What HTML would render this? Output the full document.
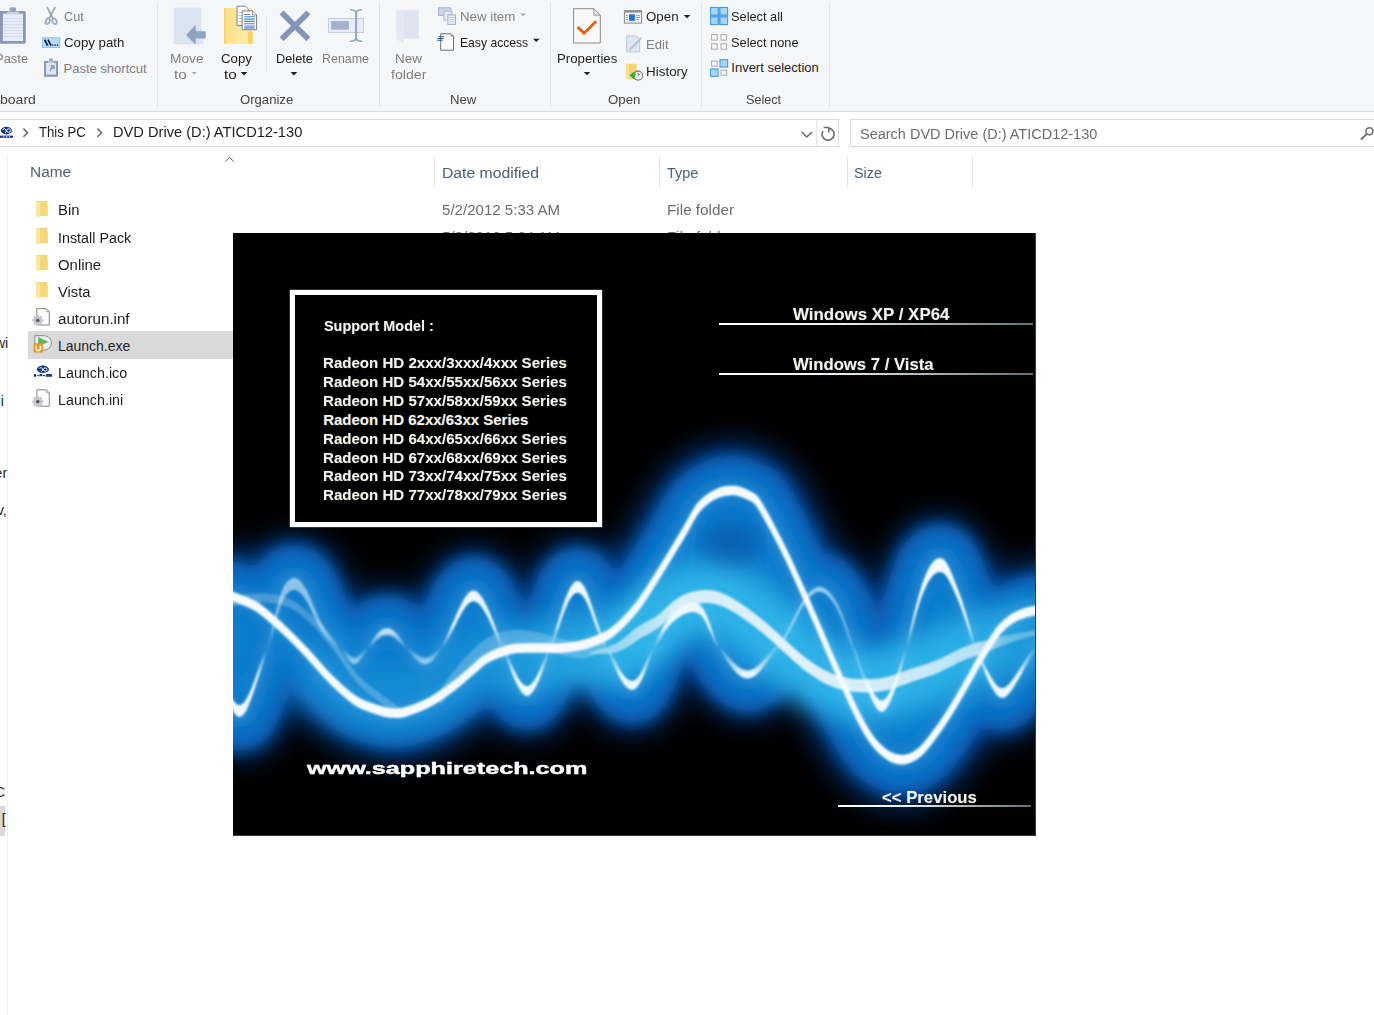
<!DOCTYPE html>
<html lang="en">
<head>
<meta charset="utf-8">
<title>DVD Drive (D:) ATICD12-130</title>
<style>
html,body{margin:0;padding:0;}
body{width:1374px;height:1015px;position:relative;overflow:hidden;background:#fff;font-family:"Liberation Sans",sans-serif;}
.t{position:absolute;white-space:pre;line-height:1;transform-origin:0 50%;font-family:"Liberation Sans",sans-serif;}
.a{position:absolute;}
.vs{position:absolute;width:1px;background:#e2e3e4;}
.ic{position:absolute;overflow:visible;}
</style>
</head>

<body>
<!-- ribbon background -->
<div class="a" style="left:0;top:0;width:1374px;height:111px;background:#f5f6f7;"></div>
<div class="a" style="left:0;top:111px;width:1374px;height:1px;background:#dadbdc;"></div>
<!-- ribbon group separators -->
<div class="vs" style="left:157px;top:2px;height:105px;"></div>
<div class="vs" style="left:266px;top:16px;height:55px;"></div>
<div class="vs" style="left:379px;top:2px;height:105px;"></div>
<div class="vs" style="left:550px;top:2px;height:105px;"></div>
<div class="vs" style="left:701px;top:2px;height:105px;"></div>
<div class="vs" style="left:829px;top:2px;height:105px;"></div>
<!-- address box -->
<div class="a" style="left:-2px;top:119px;width:839px;height:26px;border:1px solid #d9d9d9;background:#fff;"></div>
<div class="a" style="left:816px;top:120px;width:1px;height:26px;background:#e5e5e5;"></div>
<!-- search box -->
<div class="a" style="left:850px;top:119px;width:530px;height:26px;border:1px solid #d9d9d9;background:#fff;"></div>
<!-- nav pane divider -->
<div class="a" style="left:7px;top:156px;width:1px;height:859px;background:#f0f0f0;"></div>
<!-- column header separators -->
<div class="a" style="left:434px;top:156px;width:1px;height:32px;background:#e5e5e5;"></div>
<div class="a" style="left:659px;top:156px;width:1px;height:32px;background:#e5e5e5;"></div>
<div class="a" style="left:847px;top:156px;width:1px;height:32px;background:#e5e5e5;"></div>
<div class="a" style="left:972px;top:156px;width:1px;height:32px;background:#e5e5e5;"></div>
<!-- selected row -->
<div class="a" style="left:28px;top:331px;width:410px;height:27.5px;background:#d9d9d9;"></div>
<!-- nav pane selected sliver -->
<div class="a" style="left:0;top:806px;width:5px;height:29.5px;background:#d9d9d9;"></div>

<svg class="a" style="left:0;top:190px" width="70" height="230" viewBox="0 190 70 230">
<path d="M39 201.0 H47.2 L47.9 207.0 V215.9 H39Z" fill="#f7d877"/><path d="M35.9 201.0 H39.4 L39.9 202.5 V215.9 L38.6 218.2 L35.9 215.9Z" fill="#fbe7a4"/><path d="M35.9 201.0 H47.2 V201.9 H35.9Z" fill="#eed07c" opacity=".7"/>
<path d="M39 228.03 H47.2 L47.9 234.03 V242.93 H39Z" fill="#f7d877"/><path d="M35.9 228.03 H39.4 L39.9 229.53 V242.93 L38.6 245.23 L35.9 242.93Z" fill="#fbe7a4"/><path d="M35.9 228.03 H47.2 V228.93 H35.9Z" fill="#eed07c" opacity=".7"/>
<path d="M39 255.06 H47.2 L47.9 261.06 V269.96 H39Z" fill="#f7d877"/><path d="M35.9 255.06 H39.4 L39.9 256.56 V269.96 L38.6 272.26 L35.9 269.96Z" fill="#fbe7a4"/><path d="M35.9 255.06 H47.2 V255.96 H35.9Z" fill="#eed07c" opacity=".7"/>
<path d="M39 282.09000000000003 H47.2 L47.9 288.09000000000003 V296.99 H39Z" fill="#f7d877"/><path d="M35.9 282.09000000000003 H39.4 L39.9 283.59000000000003 V296.99 L38.6 299.29 L35.9 296.99Z" fill="#fbe7a4"/><path d="M35.9 282.09000000000003 H47.2 V282.99 H35.9Z" fill="#eed07c" opacity=".7"/>
<path d="M36.8 308.6 H46.3 L49.3 311.6 V325.0 H36.8Z" fill="#fdfdfd" stroke="#858585" stroke-width="1"/><path d="M46.3 308.6 V311.6 H49.3" fill="none" stroke="#9a9a9a" stroke-width=".8"/><g fill="#c2c6cb"><rect x="36.6" y="314.8" width="2.4" height="3" transform="rotate(0 37.8 320.40000000000003)"/><rect x="36.6" y="314.8" width="2.4" height="3" transform="rotate(45 37.8 320.40000000000003)"/><rect x="36.6" y="314.8" width="2.4" height="3" transform="rotate(90 37.8 320.40000000000003)"/><rect x="36.6" y="314.8" width="2.4" height="3" transform="rotate(135 37.8 320.40000000000003)"/><rect x="36.6" y="314.8" width="2.4" height="3" transform="rotate(180 37.8 320.40000000000003)"/><rect x="36.6" y="314.8" width="2.4" height="3" transform="rotate(225 37.8 320.40000000000003)"/><rect x="36.6" y="314.8" width="2.4" height="3" transform="rotate(270 37.8 320.40000000000003)"/><rect x="36.6" y="314.8" width="2.4" height="3" transform="rotate(315 37.8 320.40000000000003)"/><circle cx="37.8" cy="320.40000000000003" r="4.1"/></g><circle cx="37.8" cy="320.40000000000003" r="1.7" fill="#4f545c"/>
<path d="M34.8 335.7 H43.5 C54 335.7 54 350.1 43.5 350.1 H34.8Z" fill="#eceff3" stroke="#8a8a8a" stroke-width="1"/>
<path d="M38.2 337.1 V346 L48.7 342Z" fill="#58b558"/>
<rect x="33.5" y="343.2" width="9.4" height="9.4" fill="#e79a2c"/>
<path d="M36 345.4 V348.2 Q36 350.6 38.2 350.6 Q40.4 350.6 40.4 348.2 V345.4" fill="none" stroke="#fff4dc" stroke-width="1.5"/>
<ellipse cx="42.9" cy="369.3" rx="6" ry="3.7" fill="#153b86"/>
<g fill="none" stroke="#fff" stroke-width=".9"><path d="M39.4 368.4 Q41.2 366.6 42.6 368.6 Q43.6 370.8 41.2 371.4"/><circle cx="45.2" cy="369.5" r="1.7"/></g>
<g fill="#1d3f88"><rect x="33.8" y="374" width="2.2" height="2.8"/><rect x="36.8" y="375" width="2" height="1.2"/><rect x="39.4" y="374" width="3" height="2.2"/><rect x="43" y="375" width="2" height="1.2"/><rect x="45.8" y="374" width="6.2" height="2.8"/></g>
<path d="M36.8 389.8 H46.3 L49.3 392.8 V406.2 H36.8Z" fill="#fdfdfd" stroke="#858585" stroke-width="1"/><path d="M46.3 389.8 V392.8 H49.3" fill="none" stroke="#9a9a9a" stroke-width=".8"/><g fill="#c2c6cb"><rect x="36.6" y="396.0" width="2.4" height="3" transform="rotate(0 37.8 401.6)"/><rect x="36.6" y="396.0" width="2.4" height="3" transform="rotate(45 37.8 401.6)"/><rect x="36.6" y="396.0" width="2.4" height="3" transform="rotate(90 37.8 401.6)"/><rect x="36.6" y="396.0" width="2.4" height="3" transform="rotate(135 37.8 401.6)"/><rect x="36.6" y="396.0" width="2.4" height="3" transform="rotate(180 37.8 401.6)"/><rect x="36.6" y="396.0" width="2.4" height="3" transform="rotate(225 37.8 401.6)"/><rect x="36.6" y="396.0" width="2.4" height="3" transform="rotate(270 37.8 401.6)"/><rect x="36.6" y="396.0" width="2.4" height="3" transform="rotate(315 37.8 401.6)"/><circle cx="37.8" cy="401.6" r="4.1"/></g><circle cx="37.8" cy="401.6" r="1.7" fill="#4f545c"/>
</svg>
<svg class="a" style="left:0;top:0" width="1374" height="170" viewBox="0 0 1374 170">
<!-- Paste clipboard -->
<rect x="-3" y="10.9" width="28.8" height="32.8" rx="1.5" fill="#8b98b5"/>
<rect x="2.9" y="13.7" width="20.1" height="27.3" fill="#e7edf9"/>
<g stroke="#d3dbec" stroke-width="1"><path d="M3 18.5h20M3 21.5h20M3 24.5h20M3 27.5h20M3 30.5h20M3 33.5h20M3 36.5h20"/></g>
<path d="M5.8 14.5 L8 11.6 H18 L19.9 14.5Z" fill="#c9d1e2"/>
<rect x="9.6" y="7.3" width="6.6" height="4.6" rx="1.8" fill="#98a4be"/>
<!-- Cut -->
<g fill="none" stroke="#9aa5bb" stroke-width="1.7" stroke-linecap="round">
<path d="M47.2 7.4 L53 18.4"/><path d="M55 7.4 L49.2 18.4"/>
<ellipse cx="47.7" cy="21.3" rx="2" ry="3" transform="rotate(22 47.7 21.3)"/>
<ellipse cx="54.5" cy="21.3" rx="2" ry="3" transform="rotate(-22 54.5 21.3)"/>
</g>
<!-- Copy path -->
<rect x="42.5" y="37.8" width="17.2" height="9.6" fill="#b6dcfa" stroke="#8cbfe9" stroke-width="1"/>
<g stroke="#0c1c3c" stroke-width="1.7"><path d="M44.6 39.6 L47.6 45.6"/><path d="M48 39.6 L51 45.6"/></g>
<g fill="#0c1c3c"><rect x="52.2" y="44.4" width="1.3" height="1.3"/><rect x="54.5" y="44.4" width="1.3" height="1.3"/><rect x="56.8" y="44.4" width="1.3" height="1.3"/></g>
<!-- Paste shortcut -->
<rect x="44" y="61" width="14" height="15.8" fill="#8b98b5"/>
<rect x="46" y="63" width="10" height="11.6" fill="#dde4f2"/>
<rect x="49" y="58.6" width="4" height="3.4" rx="1.2" fill="#98a4be"/>
<path d="M47.2 62.8 L49 61 H53 L54.8 62.8Z" fill="#c9d1e2"/>
<path d="M50 65.2 H54.6 V69.8 L53 68.2 C51.4 69.4 50.6 70.8 50.4 72.4 C49.4 70 49.8 68.2 51.6 66.8Z" fill="#8b98b5"/>
<!-- Move to -->
<path d="M174.2 8 H200.8 V30.6 H202.8 V43.8 H174.2Z" fill="#dbe4f1" stroke="#d2dcea" stroke-width=".6"/>
<path d="M186 35 L195.7 25.1 V31.3 H205.8 V38.6 H195.7 V44.8Z" fill="#8fa2c2"/>
<!-- Copy to -->
<defs><linearGradient id="fy" x1="0" y1="0" x2="1" y2="0"><stop offset="0" stop-color="#ffdf85"/><stop offset="1" stop-color="#ffeeb4"/></linearGradient></defs>
<rect x="224" y="8" width="28.8" height="35.8" fill="url(#fy)"/>
<rect x="224" y="8" width="2.2" height="35.8" fill="#fbd468"/>
<path d="M248 43.8 V32.5 Q250.4 29 252.8 32.5 V43.8Z" fill="#f9d062"/>
<path d="M237 6.2 H245.5 L248.6 9.4 V25.6 H237Z" fill="#fff" stroke="#7c7c7c" stroke-width="1"/>
<g stroke="#a9b6dc" stroke-width="1"><path d="M238.5 12.5h4M238.5 15.5h4M238.5 18.5h4M238.5 21.5h4"/></g>
<path d="M242.2 10.9 H252.5 L256.6 15 V29.7 H242.2Z" fill="#fff" stroke="#7c7c7c" stroke-width="1"/>
<path d="M252.5 10.9 V15 H256.6" fill="#e9e9e9" stroke="#7c7c7c" stroke-width=".8"/>
<g stroke="#4a7fd6" stroke-width="1.1"><path d="M244.2 14.5h6M244.2 16.8h10.6M244.2 19.1h10.6M244.2 21.4h10.6M244.2 23.7h10.6M244.2 26h10.6M244.2 27.9h10.6"/></g>
<!-- Delete -->
<g stroke="#8496b8" stroke-width="5.6"><path d="M281.6 12.6 L308.4 39.3"/><path d="M308.4 12.6 L281.6 39.3"/></g>
<!-- Rename -->
<rect x="328.5" y="18.5" width="35" height="14" fill="#e8eef9" stroke="#c1cce1" stroke-width="1"/>
<rect x="331.1" y="21.1" width="17.9" height="8.6" fill="#a3b2cf"/>
<g fill="none" stroke="#95a3c0" stroke-width="2"><path d="M356.1 11 V40"/><path d="M350 9.8 Q355.4 9.6 356.1 13 Q356.8 9.6 362.1 9.8" stroke-width="1.6"/><path d="M350 41.2 Q355.4 41.4 356.1 38 Q356.8 41.4 362.1 41.2" stroke-width="1.6"/></g>
<!-- New folder -->
<path d="M403.7 9.9 H418.8 V38.7 H403.7Z" fill="#dde3ef"/>
<path d="M396.1 9.9 L403.7 13.5 V44.3 L396.1 38.7Z" fill="#e3e8f2"/>
<path d="M396.1 9.9 H418.8 V11 H403.7 V13.5Z" fill="#e3e8f2"/>
<!-- New item -->
<rect x="438.7" y="7.8" width="12" height="7.6" fill="#cfd7e8" stroke="#a5b0c8" stroke-width="1"/>
<rect x="443.8" y="11" width="8" height="9.2" fill="#e1e7f3" stroke="#b2bcd2" stroke-width="1"/>
<rect x="447.9" y="14.8" width="7.6" height="9.6" fill="#eaeff8" stroke="#a5b0c8" stroke-width="1"/>
<g stroke="#b9c3d8" stroke-width=".8"><path d="M449 17.5h5.6M449 19.6h5.6M449 21.7h5.6"/></g>
<!-- Easy access -->
<path d="M440.7 33.8 H451 L453.5 36.3 V50.2 H440.7Z" fill="#fafafa" stroke="#6f6f6f" stroke-width="1"/>
<path d="M451 33.8 V36.3 H453.5" fill="none" stroke="#8a8a8a" stroke-width=".8"/>
<g stroke="#1f5f9f" stroke-width="1.1"><path d="M438.4 36.7h5.6M437.6 38.5h6M437 40.3h5.8"/></g>
<!-- Properties -->
<path d="M573.6 8.7 H593.8 L600.3 15.2 V43 H573.6Z" fill="#f8f8f8" stroke="#8a8a8a" stroke-width="1"/>
<path d="M593.8 8.7 V15.2 H600.3Z" fill="#e6e6e6" stroke="#8a8a8a" stroke-width=".8"/>
<path d="M577.6 27 L584 33.2 L596.2 21.2" fill="none" stroke="#e2621b" stroke-width="3"/>
<!-- Open -->
<rect x="624.4" y="10.7" width="17.2" height="12.4" fill="#f1f1f1" stroke="#8a8a8a" stroke-width="1"/>
<rect x="624.4" y="10.7" width="17.2" height="1.8" fill="#8a8a8a"/>
<rect x="629.1" y="14.3" width="5.8" height="6.5" fill="#1a73d9"/>
<g stroke="#8ea0c0" stroke-width=".9"><path d="M626 15.5h2M626 17.5h2M626 19.5h2M636 15.5h4M636 17.5h4M636 19.5h3"/></g>
<!-- Edit -->
<path d="M626.7 35.9 H636.6 L639.6 38.9 V51.9 H626.7Z" fill="#dfe6f3" stroke="#bcc7dc" stroke-width="1"/>
<path d="M629.3 50.3 L641.4 38" stroke="#b4bfd6" stroke-width="1.8"/>
<!-- History -->
<path d="M626.2 63.7 H636.6 V79.3 H628.2 L626.2 78Z" fill="#f9d56e"/>
<rect x="626.2" y="63.7" width="3" height="15" fill="#fbe08e"/>
<path d="M629.6 75.4 L634.4 71.4 V73.6 Q636.6 73 637.6 70 L639.4 71.4 Q638.4 76.6 634.4 77 V79.2Z" fill="#2eb135"/>
<circle cx="638.2" cy="75.6" r="4.5" fill="#ececec" stroke="#7f7f7f" stroke-width="1.1"/>
<path d="M638.2 72.8 V75.6 L640.2 74" fill="none" stroke="#666" stroke-width=".8"/>
<path d="M629.6 75.4 L634.4 71.4 V73.6 L635.6 73.2 L635.2 76.8 L634.4 77 V79.2Z" fill="#2eb135"/>
<!-- Select all -->
<g fill="#a8d4f8" stroke="#3f9de8" stroke-width="1.1">
<rect x="710.5" y="7.5" width="7.6" height="7.6"/><rect x="720" y="7.5" width="7.6" height="7.6"/>
<rect x="710.5" y="17" width="7.6" height="7.6"/><rect x="720" y="17" width="7.6" height="7.6"/></g>
<path d="M719.05 7 V25 M710 16.05 H728.1" stroke="#3f9de8" stroke-width="1.5"/>
<!-- Select none -->
<g fill="#f9f9f9" stroke="#a9a9a9" stroke-width="1">
<rect x="711.6" y="34.7" width="5.6" height="5.4"/><rect x="721" y="34.7" width="5.6" height="5.4"/>
<rect x="711.6" y="43.8" width="5.6" height="5.4"/><rect x="721" y="43.8" width="5.6" height="5.4"/></g>
<!-- Invert selection -->
<g fill="#f9f9f9" stroke="#a9a9a9" stroke-width="1"><rect x="711.6" y="61.1" width="5.6" height="5"/><rect x="721" y="70.2" width="5.6" height="5"/></g>
<g fill="#a8d4f8" stroke="#3f9de8" stroke-width="1.1"><rect x="720" y="59.7" width="7.6" height="7.4"/><rect x="710.5" y="69" width="7.6" height="7.4"/></g>
<!-- dropdown arrows -->
<g fill="#1e1e1e">
<path d="M240.7 72 H247.4 L244.05 75.4Z"/><path d="M290.6 72 H297.3 L293.95 75.4Z"/>
<path d="M533 38.8 H539.6 L536.3 42Z"/><path d="M583.8 72 H590.2 L587 75.2Z"/><path d="M683.7 15 H690.4 L687.05 18.3Z"/></g>
<g fill="#a8a8a8"><path d="M191.8 72 H196.8 L194.3 74.6Z"/><path d="M520.3 13.4 H526 L523.15 16.2Z"/></g>
<!-- address bar: logo, chevrons -->
<g fill="#1c3a8c"><ellipse cx="6.4" cy="130.6" rx="5.6" ry="3.8"/><rect x="0" y="135.6" width="13" height="2.2"/></g>
<g fill="none" stroke="#fff" stroke-width=".9"><path d="M2.5 129.5 Q4.5 127.6 6 129.8 Q7.2 132.4 5 133"/><circle cx="8.6" cy="130.6" r="1.8"/></g>
<g fill="#fff"><rect x="3.2" y="136.2" width="1" height="1"/><rect x="6" y="136.2" width="1.2" height="1"/><rect x="9" y="136.2" width="1" height="1"/></g>
<g fill="none" stroke="#6b6b6b" stroke-width="1.6"><path d="M23.4 128.6 L27.6 132.7 L23.4 136.8"/><path d="M97.4 128.6 L101.6 132.7 L97.4 136.8"/><path d="M801.6 132 L806.8 137 L812 132"/></g>
<!-- refresh -->
<path d="M828.6 128.2 A6 6 0 1 1 822.9 131.2" fill="none" stroke="#6b6b6b" stroke-width="1.6"/>
<path d="M823.6 127.4 H828.8 V132.4" fill="none" stroke="#6b6b6b" stroke-width="1.5"/>
<!-- search magnifier -->
<circle cx="1369.4" cy="131.3" r="3.5" fill="none" stroke="#696969" stroke-width="1.5"/>
<path d="M1366.8 133.9 L1361 139.5" stroke="#696969" stroke-width="1.8"/>
<path d="M225.1 161.6 L229.4 157.3 L233.8 161.6" fill="none" stroke="#5a5a5a" stroke-width="1"/>
</svg>

<!-- launcher window -->
<div class="a" style="left:233px;top:233px;width:803px;height:603px;background:#000;overflow:hidden;z-index:3;box-sizing:border-box;border-right:1px solid #3a3a3a;border-bottom:1px solid #3a3a3a;">
<svg class="a" style="left:0;top:0" width="803" height="603" viewBox="233 233 803 603">
<defs><filter id="b18" x="-10%" y="-40%" width="120%" height="180%"><feGaussianBlur stdDeviation="15"/></filter><filter id="b8" x="-10%" y="-40%" width="120%" height="180%"><feGaussianBlur stdDeviation="7"/></filter><filter id="b9" x="-10%" y="-40%" width="120%" height="180%"><feGaussianBlur stdDeviation="10"/></filter><filter id="b13" x="-10%" y="-60%" width="120%" height="220%"><feGaussianBlur stdDeviation="13"/></filter><filter id="b4" x="-10%" y="-30%" width="120%" height="160%"><feGaussianBlur stdDeviation="4"/></filter><filter id="b1" x="-5%" y="-10%" width="110%" height="120%"><feGaussianBlur stdDeviation="0.9"/></filter><linearGradient id="gc" gradientUnits="userSpaceOnUse" x1="233" y1="0" x2="1036" y2="0"><stop offset="0" stop-color="#2aaee6" stop-opacity=".25"/><stop offset="0.3" stop-color="#2aaee6" stop-opacity=".35"/><stop offset="0.5" stop-color="#2fb6ea" stop-opacity=".95"/><stop offset="0.9" stop-color="#2fb6ea" stop-opacity=".9"/><stop offset="1" stop-color="#2fb6ea" stop-opacity=".45"/></linearGradient><linearGradient id="gb" gradientUnits="userSpaceOnUse" x1="0" y1="556" x2="0" y2="740"><stop offset="0" stop-color="#f4fafd" stop-opacity="1"/><stop offset="0.385" stop-color="#f4fafd" stop-opacity=".95"/><stop offset="0.46" stop-color="#f4fafd" stop-opacity=".4"/><stop offset="0.5" stop-color="#f4fafd" stop-opacity=".12"/><stop offset="0.55" stop-color="#f4fafd" stop-opacity=".4"/><stop offset="0.64" stop-color="#f4fafd" stop-opacity=".95"/><stop offset="1" stop-color="#f4fafd" stop-opacity="1"/></linearGradient><linearGradient id="gcr" gradientUnits="userSpaceOnUse" x1="588" y1="0" x2="1036" y2="0"><stop offset="0" stop-color="#e8f3f9" stop-opacity=".45"/><stop offset="0.2" stop-color="#f2f8fb" stop-opacity=".84"/><stop offset="0.45" stop-color="#f4f9fc" stop-opacity=".9"/><stop offset="0.75" stop-color="#f0f7fb" stop-opacity=".8"/><stop offset="0.87" stop-color="#eef6fa" stop-opacity=".7"/><stop offset="0.93" stop-color="#e8f3f9" stop-opacity=".38"/><stop offset="1" stop-color="#e8f3f9" stop-opacity=".3"/></linearGradient></defs>
<g fill="none" stroke="#063f8e" stroke-linecap="round" stroke-linejoin="round" filter="url(#b18)"><path d="M220.0 594.0C222.6 594.6 229.2 595.4 235.5 597.6C241.8 599.8 249.9 602.3 257.6 607.4C265.4 612.5 273.8 620.4 282.0 628.0C290.2 635.6 298.8 644.3 307.0 653.0C315.2 661.7 323.3 672.0 331.5 680.0C339.7 688.0 347.8 695.8 356.0 701.0C364.2 706.2 374.8 709.0 381.0 711.0C387.2 713.0 389.0 712.8 393.0 713.0C397.0 713.2 398.8 713.8 405.0 712.0C411.2 710.2 421.7 706.5 430.0 702.0C438.3 697.5 447.5 690.7 455.0 685.0C462.5 679.3 469.6 672.5 475.0 668.0C480.4 663.5 481.4 661.2 487.6 658.0C493.8 654.8 503.8 650.7 512.0 649.0C520.2 647.3 528.8 648.2 537.0 648.0C545.2 647.8 553.3 648.7 561.5 648.0C569.7 647.3 577.8 646.5 586.0 644.0C594.2 641.5 602.8 638.9 611.0 633.0C619.2 627.1 627.3 618.9 635.5 608.7C643.7 598.5 651.8 584.7 660.0 571.7C668.2 558.8 678.2 541.8 684.7 531.0C691.2 520.2 693.6 513.2 699.0 507.0C704.4 500.8 711.1 496.2 717.0 493.5C722.9 490.8 729.1 490.1 734.6 490.5C740.1 490.9 746.1 494.0 750.0 496.0C753.9 498.0 754.2 497.0 758.0 502.5C761.8 508.0 768.0 519.6 773.0 529.0C778.0 538.4 783.1 548.4 788.0 558.7C792.9 569.0 797.8 580.2 802.6 591.0C807.4 601.8 812.1 612.4 817.0 623.7C821.9 635.0 827.3 648.3 832.0 659.0C836.7 669.7 840.7 678.5 845.0 688.0C849.3 697.5 853.5 707.3 858.0 716.0C862.5 724.7 866.8 733.3 872.0 740.0C877.2 746.7 883.5 752.8 889.0 756.0C894.5 759.2 899.7 760.3 905.0 759.5C910.3 758.7 915.4 756.1 921.0 751.0C926.6 745.9 933.2 736.3 938.5 729.0C943.8 721.7 948.1 715.0 953.0 707.0C957.9 699.0 963.8 688.3 968.0 681.0C972.2 673.7 974.7 668.7 978.0 663.0C981.3 657.3 984.1 652.7 987.8 647.0C991.5 641.3 995.9 633.8 1000.0 629.0C1004.1 624.2 1008.3 621.2 1012.4 618.5C1016.5 615.8 1021.0 614.3 1024.7 613.0C1028.4 611.7 1030.4 611.3 1034.6 610.5C1038.8 609.7 1047.4 608.4 1050.0 608.0" stroke-width="90"/><path d="M222.0 680.0C223.8 685.2 230.0 704.8 233.0 711.0C236.0 717.2 237.7 717.3 240.0 717.0C242.3 716.7 244.1 715.2 247.0 709.0C249.9 702.8 253.8 691.8 257.6 680.0C261.4 668.2 265.9 652.8 270.0 638.0C274.1 623.2 279.0 600.5 282.0 591.0C285.0 581.5 285.9 583.2 288.0 581.0C290.1 578.8 292.4 577.8 294.6 578.0C296.8 578.2 298.9 579.8 301.0 582.0C303.1 584.2 304.0 584.9 307.0 591.0C310.0 597.1 314.1 609.8 319.0 618.5C323.9 627.2 331.7 636.2 336.5 643.0C341.3 649.8 345.1 655.5 348.0 659.0C350.9 662.5 351.7 663.8 353.7 664.0C355.7 664.2 356.9 663.8 360.0 660.0C363.1 656.2 368.7 645.8 372.0 641.0C375.3 636.2 377.5 633.1 380.0 631.0C382.5 628.9 384.7 628.4 387.0 628.4C389.3 628.4 391.0 628.2 394.0 631.0C397.0 633.8 401.0 640.0 405.0 645.0C409.0 650.0 414.7 657.8 418.0 661.0C421.3 664.2 422.7 664.0 425.0 664.0C427.3 664.0 428.7 665.0 432.0 661.0C435.3 657.0 440.7 648.3 445.0 640.0C449.3 631.7 454.5 618.3 458.0 611.0C461.5 603.7 463.4 599.4 466.0 596.0C468.6 592.6 471.0 590.5 473.5 590.5C476.0 590.5 477.4 590.1 481.0 596.0C484.6 601.9 490.2 614.0 495.0 626.0C499.8 638.0 505.8 657.3 510.0 668.0C514.2 678.7 517.2 685.3 520.0 690.0C522.8 694.7 524.7 696.0 527.0 696.0C529.3 696.0 530.7 696.3 534.0 690.0C537.3 683.7 542.8 669.9 547.0 658.0C551.2 646.1 555.3 629.8 559.0 618.5C562.7 607.2 565.9 596.2 569.0 590.0C572.1 583.8 574.7 581.0 577.5 581.0C580.3 581.0 582.9 583.8 586.0 590.0C589.1 596.2 591.8 607.2 596.0 618.5C600.2 629.8 606.5 647.2 611.0 658.0C615.5 668.8 619.5 677.7 623.0 683.0C626.5 688.3 628.9 690.0 631.7 690.0C634.5 690.0 637.0 688.3 640.0 683.0C643.0 677.7 646.2 667.2 650.0 658.0C653.8 648.8 657.8 636.2 662.5 628.0C667.2 619.8 672.4 613.2 678.0 609.0C683.6 604.8 691.5 602.5 696.0 603.0C700.5 603.5 702.0 606.6 705.0 612.0C708.0 617.4 709.8 626.7 714.0 635.5C718.2 644.3 724.6 657.9 730.0 665.0C735.4 672.1 741.9 676.9 746.4 678.4C750.9 679.9 753.6 676.7 757.0 674.0C760.4 671.3 761.8 669.4 767.0 662.0C772.2 654.6 781.6 640.4 788.0 629.6C794.4 618.8 801.3 603.8 805.5 597.0C809.7 590.2 810.6 590.7 813.0 589.0C815.4 587.3 817.5 586.5 820.0 586.8C822.5 587.1 824.5 586.8 828.0 591.0C831.5 595.2 835.9 599.7 841.0 612.0C846.1 624.3 853.5 650.3 858.7 665.0C863.9 679.7 868.2 692.2 872.0 700.0C875.8 707.8 878.8 711.0 881.5 712.0C884.2 713.0 885.9 709.3 888.0 706.0C890.1 702.7 891.3 700.4 894.0 692.4C896.7 684.4 900.7 671.1 904.0 658.0C907.3 644.9 910.3 627.6 914.0 613.6C917.7 599.6 922.8 582.6 926.0 574.0C929.2 565.4 930.7 564.7 933.0 562.0C935.3 559.3 937.6 558.0 939.8 558.0C942.0 558.0 943.8 558.9 946.0 562.0C948.2 565.1 950.2 569.8 953.0 576.7C955.8 583.7 959.7 593.5 963.0 603.7C966.3 613.9 969.7 627.3 973.0 638.0C976.3 648.7 979.7 659.5 983.0 668.0C986.3 676.5 989.7 684.0 992.7 689.0C995.7 694.0 997.7 698.0 1001.0 698.0C1004.3 698.0 1008.4 694.0 1012.4 689.0C1016.4 684.0 1021.0 674.4 1024.7 668.0C1028.4 661.6 1030.4 658.2 1034.6 650.5C1038.8 642.8 1047.4 626.8 1050.0 622.0" stroke-width="78"/></g>
<g fill="#0963ba" stroke="#0963ba" stroke-linecap="round" stroke-linejoin="round" filter="url(#b8)"><path d="M215 588.3L221 588.9L227 589.9L233 591.2L239 593.1L245 595.4L251 598.3L257 601.8L263 604.9L269 603.0L275 598.0L281 591.3L287 584.1L293 578.3L299 579.5L305 585.9L311 595.4L317 606.2L323 616.9L329 626.8L335 635.5L341 643.1L347 648.6L353 650.9L359 649.6L365 644.8L371 637.9L377 631.4L383 627.2L389 626.6L395 629.3L401 634.7L407 641.3L413 647.8L419 652.3L425 653.7L431 651.3L437 645.2L443 635.9L449 624.5L455 612.5L461 601.8L467 594.2L473 591.2L479 593.4L485 600.8L491 612.4L497 623.5L503 632.8L509 639.2L515 642.5L521 642.4L527 642.1L533 642.0L539 641.5L545 636.9L551 628.5L557 616.8L563 603.6L569 591.0L575 584.5L581 585.2L587 592.6L593 603.6L599 613.7L605 620.9L611 623.7L617 621.6L623 616.1L629 609.7L635 602.5L641 594.4L647 585.8L653 576.7L659 567.3L665 557.7L671 547.9L677 537.9L683 527.7L689 517.8L695 508.7L701 500.9L707 494.9L713 490.5L719 487.7L725 486.1L731 485.5L737 486.1L743 487.7L749 491.0L755 496.2L761 503.5L767 512.6L773 523.2L779 534.9L785 547.1L791 559.7L797 570.1L803 577.1L809 581.5L815 583.9L821 584.9L827 587.9L833 594.8L839 605.5L845 619.4L851 635.6L857 651.2L863 663.8L869 672.7L875 677.4L881 678.3L887 676.5L893 670.2L899 658.6L905 642.2L911 622.2L917 600.3L923 581.6L929 567.9L935 560.3L941 559.3L947 564.1L953 574.1L959 588.7L965 605.8L971 619.9L977 630.5L983 635.6L989 634.9L995 629.6L1001 623.8L1007 617.8L1013 613.2L1019 609.9L1025 607.5L1031 605.7L1037 604.3L1043 603.3L1049 602.7L1055 602.2L1055 636.3L1049 639.8L1043 645.4L1037 653.1L1031 662.8L1025 673.4L1019 683.3L1013 691.5L1007 696.5L1001 697.3L995 693.3L989 687.1L983 682.6L977 681.3L971 684.3L965 692.1L959 702.5L953 712.4L947 722.0L941 731.0L935 739.4L929 747.0L923 753.4L917 758.5L911 762.0L905 763.8L899 763.9L893 762.4L887 759.3L881 754.5L875 748.0L869 739.8L863 730.1L857 718.9L851 708.2L845 699.2L839 692.0L833 686.7L827 683.3L821 680.2L815 676.6L809 672.5L803 667.9L797 663.0L791 658.6L785 656.9L779 657.8L773 661.4L767 667.2L761 673.9L755 678.6L749 680.8L743 680.1L737 676.6L731 670.4L725 661.4L719 650.1L713 638.1L707 627.1L701 618.2L695 612.7L689 611.4L683 613.3L677 617.5L671 623.9L665 632.8L659 644.1L653 657.2L647 670.3L641 681.1L635 687.7L629 688.8L623 684.2L617 676.6L611 669.2L605 663.1L599 659.4L593 658.7L587 659.4L581 660.1L575 660.5L569 660.8L563 660.8L557 662.6L551 667.7L545 674.9L539 683.2L533 690.6L527 693.9L521 690.9L515 682.8L509 674.2L503 667.1L497 663.0L491 662.8L485 666.6L479 671.0L473 675.8L467 680.9L461 685.9L455 690.7L449 695.3L443 699.6L437 703.5L431 707.1L425 710.2L419 713.0L413 715.2L407 716.9L401 717.9L395 718.3L389 718.0L383 717.0L377 715.6L371 713.6L365 711.1L359 708.0L353 704.3L347 699.8L341 694.8L335 689.1L329 683.0L323 676.6L317 670.1L311 663.5L305 657.1L299 650.9L293 644.8L287 638.9L281 638.4L275 643.3L269 653.1L263 667.6L257 685.8L251 700.8L245 710.4L239 713.3L233 709.4L227 702.9L221 695.5L215 689.3Z" stroke="none"/><path d="M220.0 594.0C222.6 594.6 229.2 595.4 235.5 597.6C241.8 599.8 249.9 602.3 257.6 607.4C265.4 612.5 273.8 620.4 282.0 628.0C290.2 635.6 298.8 644.3 307.0 653.0C315.2 661.7 323.3 672.0 331.5 680.0C339.7 688.0 347.8 695.8 356.0 701.0C364.2 706.2 374.8 709.0 381.0 711.0C387.2 713.0 389.0 712.8 393.0 713.0C397.0 713.2 398.8 713.8 405.0 712.0C411.2 710.2 421.7 706.5 430.0 702.0C438.3 697.5 447.5 690.7 455.0 685.0C462.5 679.3 469.6 672.5 475.0 668.0C480.4 663.5 481.4 661.2 487.6 658.0C493.8 654.8 503.8 650.7 512.0 649.0C520.2 647.3 528.8 648.2 537.0 648.0C545.2 647.8 553.3 648.7 561.5 648.0C569.7 647.3 577.8 646.5 586.0 644.0C594.2 641.5 602.8 638.9 611.0 633.0C619.2 627.1 627.3 618.9 635.5 608.7C643.7 598.5 651.8 584.7 660.0 571.7C668.2 558.8 678.2 541.8 684.7 531.0C691.2 520.2 693.6 513.2 699.0 507.0C704.4 500.8 711.1 496.2 717.0 493.5C722.9 490.8 729.1 490.1 734.6 490.5C740.1 490.9 746.1 494.0 750.0 496.0C753.9 498.0 754.2 497.0 758.0 502.5C761.8 508.0 768.0 519.6 773.0 529.0C778.0 538.4 783.1 548.4 788.0 558.7C792.9 569.0 797.8 580.2 802.6 591.0C807.4 601.8 812.1 612.4 817.0 623.7C821.9 635.0 827.3 648.3 832.0 659.0C836.7 669.7 840.7 678.5 845.0 688.0C849.3 697.5 853.5 707.3 858.0 716.0C862.5 724.7 866.8 733.3 872.0 740.0C877.2 746.7 883.5 752.8 889.0 756.0C894.5 759.2 899.7 760.3 905.0 759.5C910.3 758.7 915.4 756.1 921.0 751.0C926.6 745.9 933.2 736.3 938.5 729.0C943.8 721.7 948.1 715.0 953.0 707.0C957.9 699.0 963.8 688.3 968.0 681.0C972.2 673.7 974.7 668.7 978.0 663.0C981.3 657.3 984.1 652.7 987.8 647.0C991.5 641.3 995.9 633.8 1000.0 629.0C1004.1 624.2 1008.3 621.2 1012.4 618.5C1016.5 615.8 1021.0 614.3 1024.7 613.0C1028.4 611.7 1030.4 611.3 1034.6 610.5C1038.8 609.7 1047.4 608.4 1050.0 608.0" fill="none" stroke-width="70"/><path d="M222.0 680.0C223.8 685.2 230.0 704.8 233.0 711.0C236.0 717.2 237.7 717.3 240.0 717.0C242.3 716.7 244.1 715.2 247.0 709.0C249.9 702.8 253.8 691.8 257.6 680.0C261.4 668.2 265.9 652.8 270.0 638.0C274.1 623.2 279.0 600.5 282.0 591.0C285.0 581.5 285.9 583.2 288.0 581.0C290.1 578.8 292.4 577.8 294.6 578.0C296.8 578.2 298.9 579.8 301.0 582.0C303.1 584.2 304.0 584.9 307.0 591.0C310.0 597.1 314.1 609.8 319.0 618.5C323.9 627.2 331.7 636.2 336.5 643.0C341.3 649.8 345.1 655.5 348.0 659.0C350.9 662.5 351.7 663.8 353.7 664.0C355.7 664.2 356.9 663.8 360.0 660.0C363.1 656.2 368.7 645.8 372.0 641.0C375.3 636.2 377.5 633.1 380.0 631.0C382.5 628.9 384.7 628.4 387.0 628.4C389.3 628.4 391.0 628.2 394.0 631.0C397.0 633.8 401.0 640.0 405.0 645.0C409.0 650.0 414.7 657.8 418.0 661.0C421.3 664.2 422.7 664.0 425.0 664.0C427.3 664.0 428.7 665.0 432.0 661.0C435.3 657.0 440.7 648.3 445.0 640.0C449.3 631.7 454.5 618.3 458.0 611.0C461.5 603.7 463.4 599.4 466.0 596.0C468.6 592.6 471.0 590.5 473.5 590.5C476.0 590.5 477.4 590.1 481.0 596.0C484.6 601.9 490.2 614.0 495.0 626.0C499.8 638.0 505.8 657.3 510.0 668.0C514.2 678.7 517.2 685.3 520.0 690.0C522.8 694.7 524.7 696.0 527.0 696.0C529.3 696.0 530.7 696.3 534.0 690.0C537.3 683.7 542.8 669.9 547.0 658.0C551.2 646.1 555.3 629.8 559.0 618.5C562.7 607.2 565.9 596.2 569.0 590.0C572.1 583.8 574.7 581.0 577.5 581.0C580.3 581.0 582.9 583.8 586.0 590.0C589.1 596.2 591.8 607.2 596.0 618.5C600.2 629.8 606.5 647.2 611.0 658.0C615.5 668.8 619.5 677.7 623.0 683.0C626.5 688.3 628.9 690.0 631.7 690.0C634.5 690.0 637.0 688.3 640.0 683.0C643.0 677.7 646.2 667.2 650.0 658.0C653.8 648.8 657.8 636.2 662.5 628.0C667.2 619.8 672.4 613.2 678.0 609.0C683.6 604.8 691.5 602.5 696.0 603.0C700.5 603.5 702.0 606.6 705.0 612.0C708.0 617.4 709.8 626.7 714.0 635.5C718.2 644.3 724.6 657.9 730.0 665.0C735.4 672.1 741.9 676.9 746.4 678.4C750.9 679.9 753.6 676.7 757.0 674.0C760.4 671.3 761.8 669.4 767.0 662.0C772.2 654.6 781.6 640.4 788.0 629.6C794.4 618.8 801.3 603.8 805.5 597.0C809.7 590.2 810.6 590.7 813.0 589.0C815.4 587.3 817.5 586.5 820.0 586.8C822.5 587.1 824.5 586.8 828.0 591.0C831.5 595.2 835.9 599.7 841.0 612.0C846.1 624.3 853.5 650.3 858.7 665.0C863.9 679.7 868.2 692.2 872.0 700.0C875.8 707.8 878.8 711.0 881.5 712.0C884.2 713.0 885.9 709.3 888.0 706.0C890.1 702.7 891.3 700.4 894.0 692.4C896.7 684.4 900.7 671.1 904.0 658.0C907.3 644.9 910.3 627.6 914.0 613.6C917.7 599.6 922.8 582.6 926.0 574.0C929.2 565.4 930.7 564.7 933.0 562.0C935.3 559.3 937.6 558.0 939.8 558.0C942.0 558.0 943.8 558.9 946.0 562.0C948.2 565.1 950.2 569.8 953.0 576.7C955.8 583.7 959.7 593.5 963.0 603.7C966.3 613.9 969.7 627.3 973.0 638.0C976.3 648.7 979.7 659.5 983.0 668.0C986.3 676.5 989.7 684.0 992.7 689.0C995.7 694.0 997.7 698.0 1001.0 698.0C1004.3 698.0 1008.4 694.0 1012.4 689.0C1016.4 684.0 1021.0 674.4 1024.7 668.0C1028.4 661.6 1030.4 658.2 1034.6 650.5C1038.8 642.8 1047.4 626.8 1050.0 622.0" fill="none" stroke-width="68"/></g>
<path d="M215 583.0L221 583.0L227 583.3L233 583.9L239 584.9L245 586.2L251 588.1L257 587.8L263 584.8L269 580.7L275 576.1L281 571.0L287 567.9L293 567.1L299 567.5L305 569.3L311 573.7L317 580.9L323 590.4L329 601.2L335 611.9L341 621.8L347 627.5L353 629.2L359 628.2L365 625.7L371 621.6L377 618.8L383 617.7L389 617.6L395 618.2L401 620.4L407 624.2L413 629.5L419 632.6L425 632.5L431 628.2L437 619.5L443 607.5L449 596.8L455 588.6L461 583.2L467 580.4L473 579.5L479 580.1L485 582.5L491 587.6L497 595.8L503 607.2L509 618.1L515 627.2L521 633.6L527 636.4L533 631.8L539 623.4L545 611.8L551 598.6L557 585.9L563 577.2L569 572.5L575 570.8L581 571.0L587 573.0L593 578.5L599 586.8L605 593.7L611 599.1L617 600.9L623 597.5L629 589.4L635 580.8L641 571.7L647 562.3L653 552.7L659 542.9L665 532.9L671 522.7L677 512.8L683 503.7L689 495.9L695 489.9L701 485.5L707 482.7L713 481.0L719 480.0L725 479.5L731 479.4L737 479.5L743 479.9L749 480.9L755 482.7L761 486.0L767 491.2L773 498.5L779 507.6L785 518.2L791 529.9L797 542.1L803 553.7L809 563.0L815 569.8L821 574.2L827 576.6L833 578.6L839 582.7L845 589.8L851 600.5L857 614.4L863 630.6L869 645.5L875 656.4L881 659.0L887 652.4L893 637.2L899 617.2L905 595.3L911 576.6L917 562.9L923 554.2L929 549.4L935 547.5L941 547.1L947 548.2L953 551.9L959 558.7L965 569.1L971 583.7L977 596.6L983 605.7L989 610.9L995 611.9L1001 608.2L1007 604.9L1013 602.5L1019 600.7L1025 599.3L1031 598.3L1037 597.7L1043 597.2L1049 597.0L1055 597.0L1055 652.9L1049 659.3L1043 667.8L1037 678.4L1031 688.3L1025 696.5L1019 702.6L1013 706.6L1007 708.5L1001 709.0L995 707.9L989 705.6L983 705.4L977 707.2L971 710.9L965 717.4L959 727.0L953 736.0L947 744.4L941 752.0L935 758.4L929 763.5L923 767.0L917 769.1L911 770.2L905 770.5L899 770.5L893 770.2L887 769.2L881 767.4L875 764.3L869 759.5L863 753.0L857 744.8L851 735.1L845 723.9L839 713.2L833 704.2L827 697.0L821 691.7L815 688.3L809 685.2L803 681.6L797 677.5L791 674.9L785 674.7L779 676.4L773 679.6L767 683.8L761 687.1L755 688.8L749 689.4L743 689.2L737 688.1L731 685.7L725 681.6L719 675.4L713 666.4L707 655.1L701 643.8L695 635.4L689 630.7L683 631.1L677 637.8L671 649.1L665 662.2L659 675.3L653 686.1L647 694.0L641 698.6L635 700.2L629 700.2L623 699.0L617 695.5L611 689.3L605 682.3L599 675.4L593 669.8L587 666.4L581 665.8L575 666.0L569 667.9L563 672.9L557 680.2L551 688.3L545 696.5L539 702.9L533 706.1L527 707.0L521 706.1L515 703.0L509 696.8L503 690.5L497 685.3L491 682.0L485 681.9L479 685.9L473 690.9L467 695.7L461 700.3L455 704.6L449 708.5L443 712.1L437 715.2L431 718.0L425 720.2L419 721.9L413 723.0L407 723.7L401 724.0L395 724.1L389 724.0L383 723.6L377 723.0L371 722.0L365 720.6L359 718.6L353 716.1L347 713.0L341 709.3L335 704.8L329 699.8L323 694.1L317 688.0L311 681.6L305 675.1L299 668.5L293 662.8L287 662.6L281 667.5L275 677.2L269 690.8L263 705.8L257 716.6L251 723.6L245 727.1L239 728.0L233 726.8L227 722.7L221 718.6L215 714.6Z" fill="#0b7ccc" filter="url(#b9)"/>
<g fill="none" stroke="#0b7ccc" stroke-linecap="round" filter="url(#b9)"><path d="M220.0 594.0C222.6 594.6 229.2 595.4 235.5 597.6C241.8 599.8 249.9 602.3 257.6 607.4C265.4 612.5 273.8 620.4 282.0 628.0C290.2 635.6 298.8 644.3 307.0 653.0C315.2 661.7 323.3 672.0 331.5 680.0C339.7 688.0 347.8 695.8 356.0 701.0C364.2 706.2 374.8 709.0 381.0 711.0C387.2 713.0 389.0 712.8 393.0 713.0C397.0 713.2 398.8 713.8 405.0 712.0C411.2 710.2 421.7 706.5 430.0 702.0C438.3 697.5 447.5 690.7 455.0 685.0C462.5 679.3 469.6 672.5 475.0 668.0C480.4 663.5 481.4 661.2 487.6 658.0C493.8 654.8 503.8 650.7 512.0 649.0C520.2 647.3 528.8 648.2 537.0 648.0C545.2 647.8 553.3 648.7 561.5 648.0C569.7 647.3 577.8 646.5 586.0 644.0C594.2 641.5 602.8 638.9 611.0 633.0C619.2 627.1 627.3 618.9 635.5 608.7C643.7 598.5 651.8 584.7 660.0 571.7C668.2 558.8 678.2 541.8 684.7 531.0C691.2 520.2 693.6 513.2 699.0 507.0C704.4 500.8 711.1 496.2 717.0 493.5C722.9 490.8 729.1 490.1 734.6 490.5C740.1 490.9 746.1 494.0 750.0 496.0C753.9 498.0 754.2 497.0 758.0 502.5C761.8 508.0 768.0 519.6 773.0 529.0C778.0 538.4 783.1 548.4 788.0 558.7C792.9 569.0 797.8 580.2 802.6 591.0C807.4 601.8 812.1 612.4 817.0 623.7C821.9 635.0 827.3 648.3 832.0 659.0C836.7 669.7 840.7 678.5 845.0 688.0C849.3 697.5 853.5 707.3 858.0 716.0C862.5 724.7 866.8 733.3 872.0 740.0C877.2 746.7 883.5 752.8 889.0 756.0C894.5 759.2 899.7 760.3 905.0 759.5C910.3 758.7 915.4 756.1 921.0 751.0C926.6 745.9 933.2 736.3 938.5 729.0C943.8 721.7 948.1 715.0 953.0 707.0C957.9 699.0 963.8 688.3 968.0 681.0C972.2 673.7 974.7 668.7 978.0 663.0C981.3 657.3 984.1 652.7 987.8 647.0C991.5 641.3 995.9 633.8 1000.0 629.0C1004.1 624.2 1008.3 621.2 1012.4 618.5C1016.5 615.8 1021.0 614.3 1024.7 613.0C1028.4 611.7 1030.4 611.3 1034.6 610.5C1038.8 609.7 1047.4 608.4 1050.0 608.0" stroke-width="30"/><path d="M222.0 680.0C223.8 685.2 230.0 704.8 233.0 711.0C236.0 717.2 237.7 717.3 240.0 717.0C242.3 716.7 244.1 715.2 247.0 709.0C249.9 702.8 253.8 691.8 257.6 680.0C261.4 668.2 265.9 652.8 270.0 638.0C274.1 623.2 279.0 600.5 282.0 591.0C285.0 581.5 285.9 583.2 288.0 581.0C290.1 578.8 292.4 577.8 294.6 578.0C296.8 578.2 298.9 579.8 301.0 582.0C303.1 584.2 304.0 584.9 307.0 591.0C310.0 597.1 314.1 609.8 319.0 618.5C323.9 627.2 331.7 636.2 336.5 643.0C341.3 649.8 345.1 655.5 348.0 659.0C350.9 662.5 351.7 663.8 353.7 664.0C355.7 664.2 356.9 663.8 360.0 660.0C363.1 656.2 368.7 645.8 372.0 641.0C375.3 636.2 377.5 633.1 380.0 631.0C382.5 628.9 384.7 628.4 387.0 628.4C389.3 628.4 391.0 628.2 394.0 631.0C397.0 633.8 401.0 640.0 405.0 645.0C409.0 650.0 414.7 657.8 418.0 661.0C421.3 664.2 422.7 664.0 425.0 664.0C427.3 664.0 428.7 665.0 432.0 661.0C435.3 657.0 440.7 648.3 445.0 640.0C449.3 631.7 454.5 618.3 458.0 611.0C461.5 603.7 463.4 599.4 466.0 596.0C468.6 592.6 471.0 590.5 473.5 590.5C476.0 590.5 477.4 590.1 481.0 596.0C484.6 601.9 490.2 614.0 495.0 626.0C499.8 638.0 505.8 657.3 510.0 668.0C514.2 678.7 517.2 685.3 520.0 690.0C522.8 694.7 524.7 696.0 527.0 696.0C529.3 696.0 530.7 696.3 534.0 690.0C537.3 683.7 542.8 669.9 547.0 658.0C551.2 646.1 555.3 629.8 559.0 618.5C562.7 607.2 565.9 596.2 569.0 590.0C572.1 583.8 574.7 581.0 577.5 581.0C580.3 581.0 582.9 583.8 586.0 590.0C589.1 596.2 591.8 607.2 596.0 618.5C600.2 629.8 606.5 647.2 611.0 658.0C615.5 668.8 619.5 677.7 623.0 683.0C626.5 688.3 628.9 690.0 631.7 690.0C634.5 690.0 637.0 688.3 640.0 683.0C643.0 677.7 646.2 667.2 650.0 658.0C653.8 648.8 657.8 636.2 662.5 628.0C667.2 619.8 672.4 613.2 678.0 609.0C683.6 604.8 691.5 602.5 696.0 603.0C700.5 603.5 702.0 606.6 705.0 612.0C708.0 617.4 709.8 626.7 714.0 635.5C718.2 644.3 724.6 657.9 730.0 665.0C735.4 672.1 741.9 676.9 746.4 678.4C750.9 679.9 753.6 676.7 757.0 674.0C760.4 671.3 761.8 669.4 767.0 662.0C772.2 654.6 781.6 640.4 788.0 629.6C794.4 618.8 801.3 603.8 805.5 597.0C809.7 590.2 810.6 590.7 813.0 589.0C815.4 587.3 817.5 586.5 820.0 586.8C822.5 587.1 824.5 586.8 828.0 591.0C831.5 595.2 835.9 599.7 841.0 612.0C846.1 624.3 853.5 650.3 858.7 665.0C863.9 679.7 868.2 692.2 872.0 700.0C875.8 707.8 878.8 711.0 881.5 712.0C884.2 713.0 885.9 709.3 888.0 706.0C890.1 702.7 891.3 700.4 894.0 692.4C896.7 684.4 900.7 671.1 904.0 658.0C907.3 644.9 910.3 627.6 914.0 613.6C917.7 599.6 922.8 582.6 926.0 574.0C929.2 565.4 930.7 564.7 933.0 562.0C935.3 559.3 937.6 558.0 939.8 558.0C942.0 558.0 943.8 558.9 946.0 562.0C948.2 565.1 950.2 569.8 953.0 576.7C955.8 583.7 959.7 593.5 963.0 603.7C966.3 613.9 969.7 627.3 973.0 638.0C976.3 648.7 979.7 659.5 983.0 668.0C986.3 676.5 989.7 684.0 992.7 689.0C995.7 694.0 997.7 698.0 1001.0 698.0C1004.3 698.0 1008.4 694.0 1012.4 689.0C1016.4 684.0 1021.0 674.4 1024.7 668.0C1028.4 661.6 1030.4 658.2 1034.6 650.5C1038.8 642.8 1047.4 626.8 1050.0 622.0" stroke-width="24"/></g>
<path d="M300.0 665.0C310.0 670.8 340.0 694.2 360.0 700.0C380.0 705.8 400.0 705.8 420.0 700.0C440.0 694.2 456.7 672.5 480.0 665.0C503.3 657.5 540.2 657.2 560.0 655.0C579.8 652.8 588.5 653.5 598.5 652.0C608.5 650.5 613.1 649.3 620.0 646.0C626.9 642.7 633.3 636.3 640.0 632.0C646.7 627.7 655.1 623.5 660.0 620.0C664.9 616.5 665.5 614.2 669.6 611.0C673.7 607.8 679.8 603.3 684.7 601.0C689.6 598.7 694.3 597.7 699.0 597.0C703.7 596.3 709.0 596.5 713.0 597.0C717.0 597.5 717.7 597.5 722.8 600.0C727.9 602.5 735.1 606.1 743.5 612.0C751.9 617.9 763.1 627.2 773.0 635.5C782.9 643.8 792.8 654.6 802.6 662.0C812.4 669.4 822.1 676.0 832.0 680.0C841.9 684.0 852.2 685.3 861.7 685.8C871.2 686.3 880.3 684.9 889.0 683.0C897.7 681.1 905.8 677.3 914.0 674.5C922.2 671.7 930.3 669.4 938.5 666.0C946.7 662.6 954.8 657.4 963.0 654.0C971.2 650.6 979.8 648.3 988.0 645.6C996.2 642.9 1004.6 640.1 1012.4 638.0C1020.2 635.9 1028.3 634.5 1034.6 633.0C1040.9 631.5 1047.4 629.7 1050.0 629.0" fill="none" stroke="url(#gc)" stroke-width="70" filter="url(#b13)"/>
<ellipse cx="731" cy="543" rx="30" ry="22" fill="#073a8c" fill-opacity=".4" filter="url(#b9)"/>
<g fill="none" stroke="#8ad8f8" stroke-opacity=".32" filter="url(#b4)"><path d="M220.0 594.0C222.6 594.6 229.2 595.4 235.5 597.6C241.8 599.8 249.9 602.3 257.6 607.4C265.4 612.5 273.8 620.4 282.0 628.0C290.2 635.6 298.8 644.3 307.0 653.0C315.2 661.7 323.3 672.0 331.5 680.0C339.7 688.0 347.8 695.8 356.0 701.0C364.2 706.2 374.8 709.0 381.0 711.0C387.2 713.0 389.0 712.8 393.0 713.0C397.0 713.2 398.8 713.8 405.0 712.0C411.2 710.2 421.7 706.5 430.0 702.0C438.3 697.5 447.5 690.7 455.0 685.0C462.5 679.3 469.6 672.5 475.0 668.0C480.4 663.5 481.4 661.2 487.6 658.0C493.8 654.8 503.8 650.7 512.0 649.0C520.2 647.3 528.8 648.2 537.0 648.0C545.2 647.8 553.3 648.7 561.5 648.0C569.7 647.3 577.8 646.5 586.0 644.0C594.2 641.5 602.8 638.9 611.0 633.0C619.2 627.1 627.3 618.9 635.5 608.7C643.7 598.5 651.8 584.7 660.0 571.7C668.2 558.8 678.2 541.8 684.7 531.0C691.2 520.2 693.6 513.2 699.0 507.0C704.4 500.8 711.1 496.2 717.0 493.5C722.9 490.8 729.1 490.1 734.6 490.5C740.1 490.9 746.1 494.0 750.0 496.0C753.9 498.0 754.2 497.0 758.0 502.5C761.8 508.0 768.0 519.6 773.0 529.0C778.0 538.4 783.1 548.4 788.0 558.7C792.9 569.0 797.8 580.2 802.6 591.0C807.4 601.8 812.1 612.4 817.0 623.7C821.9 635.0 827.3 648.3 832.0 659.0C836.7 669.7 840.7 678.5 845.0 688.0C849.3 697.5 853.5 707.3 858.0 716.0C862.5 724.7 866.8 733.3 872.0 740.0C877.2 746.7 883.5 752.8 889.0 756.0C894.5 759.2 899.7 760.3 905.0 759.5C910.3 758.7 915.4 756.1 921.0 751.0C926.6 745.9 933.2 736.3 938.5 729.0C943.8 721.7 948.1 715.0 953.0 707.0C957.9 699.0 963.8 688.3 968.0 681.0C972.2 673.7 974.7 668.7 978.0 663.0C981.3 657.3 984.1 652.7 987.8 647.0C991.5 641.3 995.9 633.8 1000.0 629.0C1004.1 624.2 1008.3 621.2 1012.4 618.5C1016.5 615.8 1021.0 614.3 1024.7 613.0C1028.4 611.7 1030.4 611.3 1034.6 610.5C1038.8 609.7 1047.4 608.4 1050.0 608.0" stroke-width="8"/><path d="M222.0 680.0C223.8 685.2 230.0 704.8 233.0 711.0C236.0 717.2 237.7 717.3 240.0 717.0C242.3 716.7 244.1 715.2 247.0 709.0C249.9 702.8 253.8 691.8 257.6 680.0C261.4 668.2 265.9 652.8 270.0 638.0C274.1 623.2 279.0 600.5 282.0 591.0C285.0 581.5 285.9 583.2 288.0 581.0C290.1 578.8 292.4 577.8 294.6 578.0C296.8 578.2 298.9 579.8 301.0 582.0C303.1 584.2 304.0 584.9 307.0 591.0C310.0 597.1 314.1 609.8 319.0 618.5C323.9 627.2 331.7 636.2 336.5 643.0C341.3 649.8 345.1 655.5 348.0 659.0C350.9 662.5 351.7 663.8 353.7 664.0C355.7 664.2 356.9 663.8 360.0 660.0C363.1 656.2 368.7 645.8 372.0 641.0C375.3 636.2 377.5 633.1 380.0 631.0C382.5 628.9 384.7 628.4 387.0 628.4C389.3 628.4 391.0 628.2 394.0 631.0C397.0 633.8 401.0 640.0 405.0 645.0C409.0 650.0 414.7 657.8 418.0 661.0C421.3 664.2 422.7 664.0 425.0 664.0C427.3 664.0 428.7 665.0 432.0 661.0C435.3 657.0 440.7 648.3 445.0 640.0C449.3 631.7 454.5 618.3 458.0 611.0C461.5 603.7 463.4 599.4 466.0 596.0C468.6 592.6 471.0 590.5 473.5 590.5C476.0 590.5 477.4 590.1 481.0 596.0C484.6 601.9 490.2 614.0 495.0 626.0C499.8 638.0 505.8 657.3 510.0 668.0C514.2 678.7 517.2 685.3 520.0 690.0C522.8 694.7 524.7 696.0 527.0 696.0C529.3 696.0 530.7 696.3 534.0 690.0C537.3 683.7 542.8 669.9 547.0 658.0C551.2 646.1 555.3 629.8 559.0 618.5C562.7 607.2 565.9 596.2 569.0 590.0C572.1 583.8 574.7 581.0 577.5 581.0C580.3 581.0 582.9 583.8 586.0 590.0C589.1 596.2 591.8 607.2 596.0 618.5C600.2 629.8 606.5 647.2 611.0 658.0C615.5 668.8 619.5 677.7 623.0 683.0C626.5 688.3 628.9 690.0 631.7 690.0C634.5 690.0 637.0 688.3 640.0 683.0C643.0 677.7 646.2 667.2 650.0 658.0C653.8 648.8 657.8 636.2 662.5 628.0C667.2 619.8 672.4 613.2 678.0 609.0C683.6 604.8 691.5 602.5 696.0 603.0C700.5 603.5 702.0 606.6 705.0 612.0C708.0 617.4 709.8 626.7 714.0 635.5C718.2 644.3 724.6 657.9 730.0 665.0C735.4 672.1 741.9 676.9 746.4 678.4C750.9 679.9 753.6 676.7 757.0 674.0C760.4 671.3 761.8 669.4 767.0 662.0C772.2 654.6 781.6 640.4 788.0 629.6C794.4 618.8 801.3 603.8 805.5 597.0C809.7 590.2 810.6 590.7 813.0 589.0C815.4 587.3 817.5 586.5 820.0 586.8C822.5 587.1 824.5 586.8 828.0 591.0C831.5 595.2 835.9 599.7 841.0 612.0C846.1 624.3 853.5 650.3 858.7 665.0C863.9 679.7 868.2 692.2 872.0 700.0C875.8 707.8 878.8 711.0 881.5 712.0C884.2 713.0 885.9 709.3 888.0 706.0C890.1 702.7 891.3 700.4 894.0 692.4C896.7 684.4 900.7 671.1 904.0 658.0C907.3 644.9 910.3 627.6 914.0 613.6C917.7 599.6 922.8 582.6 926.0 574.0C929.2 565.4 930.7 564.7 933.0 562.0C935.3 559.3 937.6 558.0 939.8 558.0C942.0 558.0 943.8 558.9 946.0 562.0C948.2 565.1 950.2 569.8 953.0 576.7C955.8 583.7 959.7 593.5 963.0 603.7C966.3 613.9 969.7 627.3 973.0 638.0C976.3 648.7 979.7 659.5 983.0 668.0C986.3 676.5 989.7 684.0 992.7 689.0C995.7 694.0 997.7 698.0 1001.0 698.0C1004.3 698.0 1008.4 694.0 1012.4 689.0C1016.4 684.0 1021.0 674.4 1024.7 668.0C1028.4 661.6 1030.4 658.2 1034.6 650.5C1038.8 642.8 1047.4 626.8 1050.0 622.0" stroke-width="4"/></g>
<g filter="url(#b1)">
<path d="M225.0 600.0C228.8 599.0 238.5 594.7 248.0 594.0C257.5 593.3 272.2 593.2 282.0 596.0C291.8 598.8 298.8 604.0 307.0 611.0C315.2 618.0 323.3 627.7 331.5 638.0C339.7 648.3 347.8 663.7 356.0 673.0C364.2 682.3 373.7 688.2 381.0 694.0C388.3 699.8 396.8 705.7 400.0 708.0L400.0 717.0C396.8 714.7 388.3 708.8 381.0 703.0C373.7 697.2 364.2 691.3 356.0 682.0C347.8 672.7 339.7 657.3 331.5 647.0C323.3 636.7 315.2 627.0 307.0 620.0C298.8 613.0 291.8 607.8 282.0 605.0C272.2 602.2 257.5 602.3 248.0 603.0C238.5 603.7 228.8 608.0 225.0 609.0Z" fill="#cfe6f5" fill-opacity=".28"/>
<path d="M440.0 690.0C443.8 685.0 455.1 668.7 463.0 660.0C470.9 651.3 479.4 643.0 487.6 638.0C495.8 633.0 503.8 631.0 512.0 630.0C520.2 629.0 528.8 630.5 537.0 632.0C545.2 633.5 553.3 637.3 561.5 639.0C569.7 640.7 578.8 642.8 586.0 642.0C593.2 641.2 601.8 635.3 605.0 634.0L605.0 650.0C601.8 651.3 593.2 657.2 586.0 658.0C578.8 658.8 569.7 656.7 561.5 655.0C553.3 653.3 545.2 649.5 537.0 648.0C528.8 646.5 520.2 645.0 512.0 646.0C503.8 647.0 495.8 649.0 487.6 654.0C479.4 659.0 470.9 667.3 463.0 676.0C455.1 684.7 443.8 701.0 440.0 706.0Z" fill="#cfe6f5" fill-opacity=".28"/>
<path d="M588 653.4L592 652.0L596 650.7L600 649.5L604 648.3L608 646.9L612 645.3L616 643.4L620 641.0L624 638.0L628 634.7L632 631.2L636 628.1L640 625.4L644 623.1L648 621.0L652 618.8L656 616.4L660 613.4L664 609.8L668 605.9L672 602.3L676 599.3L680 596.8L684 594.7L688 593.1L692 591.8L696 590.9L700 590.3L704 589.9L708 589.9L712 590.2L716 591.1L720 592.3L724 593.9L728 595.8L732 598.0L736 600.4L740 603.0L744 605.7L748 608.6L752 611.6L756 614.6L760 617.8L764 621.1L768 624.5L772 628.0L776 631.6L780 635.3L784 639.0L788 642.6L792 646.3L796 649.8L800 653.3L804 656.5L808 659.6L812 662.4L816 665.1L820 667.5L824 669.7L828 671.7L832 673.4L836 674.9L840 676.1L844 677.1L848 677.9L852 678.4L856 678.9L860 679.1L864 679.3L868 679.2L872 679.1L876 678.7L880 678.2L884 677.5L888 676.7L892 675.6L896 674.3L900 672.9L904 671.5L908 670.0L912 668.6L916 667.2L920 665.9L924 664.7L928 663.4L932 662.0L936 660.4L940 658.7L944 656.8L948 654.8L952 652.8L956 650.7L960 648.8L964 647.0L968 645.4L972 644.0L976 642.7L980 641.8L984 640.9L988 639.9L992 639.0L996 638.0L1000 637.0L1004 636.0L1008 635.0L1012 634.2L1016 633.5L1020 632.8L1024 632.2L1028 631.4L1032 630.6L1036 629.7L1040 628.8L1044 627.8L1044 633.7L1040 634.7L1036 635.7L1032 636.5L1028 637.4L1024 638.3L1020 639.5L1016 640.7L1012 642.0L1008 643.4L1004 645.0L1000 646.5L996 648.1L992 649.7L988 651.3L984 652.8L980 654.3L976 655.8L972 657.2L968 658.6L964 660.2L960 662.0L956 663.9L952 666.0L948 668.0L944 670.0L940 671.9L936 673.6L932 675.2L928 676.6L924 677.9L920 679.1L916 680.4L912 681.8L908 683.2L904 684.7L900 686.1L896 687.5L892 688.8L888 689.9L884 690.7L880 691.4L876 691.9L872 692.3L868 692.4L864 692.5L860 692.3L856 692.1L852 691.6L848 691.1L844 690.3L840 689.3L836 688.1L832 686.6L828 684.9L824 682.9L820 680.7L816 678.3L812 675.6L808 672.8L804 669.7L800 666.5L796 663.0L792 659.5L788 655.8L784 652.2L780 648.5L776 644.8L772 641.2L768 637.7L764 634.3L760 631.0L756 627.8L752 624.8L748 621.8L744 618.9L740 616.2L736 613.6L732 611.2L728 609.0L724 607.1L720 605.5L716 604.3L712 603.4L708 603.1L704 603.1L700 603.5L696 604.1L692 605.0L688 606.3L684 607.9L680 610.0L676 612.5L672 615.5L668 619.1L664 623.0L660 626.6L656 629.6L652 632.0L648 634.2L644 636.3L640 638.6L636 641.3L632 644.2L628 646.7L624 649.1L620 651.0L616 652.4L612 653.3L608 653.8L604 654.0L600 654.1L596 654.0L592 653.9L588 653.4Z" fill="url(#gcr)"/>
<path d="M226 693.5L228 699.5L230 704.7L232 709.1L234 712.7L236 715.2L238 716.7L240 717.0L242 716.1L244 714.0L246 710.9L248 706.9L250 702.1L252 696.8L254 691.0L256 684.9L258 678.8L260 672.6L262 666.3L264 659.9L264 654.3L262 659.7L260 665.2L258 670.7L256 676.2L254 681.7L252 686.9L250 691.7L248 696.0L246 699.6L244 702.4L242 704.3L240 705.1L238 704.8L236 703.5L234 701.2L232 698.0L230 694.0L228 689.3L226 684.0Z" fill="url(#gb)"/>
<path d="M264 659.9L266 653.1L268 645.8L270 638.0L272 629.6L274 620.9L276 612.3L278 604.2L280 597.0L282 591.0L284 586.5L286 583.3L288 581.0L290 579.4L292 578.3L294 578.0L296 578.3L298 579.3L300 581.0L302 583.2L304 585.9L306 589.1L308 593.0L310 597.4L312 602.1L314 607.0L316 611.8L318 616.4L320 620.5L322 624.1L324 627.3L326 630.1L328 632.7L330 635.2L332 637.5L334 639.9L336 642.4L338 645.0L340 647.8L342 650.6L344 653.5L346 656.3L346 651.9L344 650.2L342 649.0L340 647.9L338 646.9L336 645.7L334 644.3L332 642.7L330 640.9L328 638.9L326 636.7L324 634.3L322 631.4L320 628.2L318 624.5L316 620.4L314 616.1L312 611.7L310 607.5L308 603.5L306 600.0L304 597.1L302 594.6L300 592.7L298 591.2L296 590.3L294 590.0L292 590.3L290 591.2L288 592.7L286 594.8L284 597.7L282 601.7L280 607.1L278 613.6L276 620.9L274 628.6L272 636.3L270 643.0L268 647.2L266 650.0L264 654.3Z" fill="url(#gb)" opacity=".55"/>
<path d="M346 656.3L348 659.0L350 661.4L352 663.2L354 664.0L356 663.6L358 662.2L360 660.0L362 657.3L364 654.3L366 651.0L368 647.7L370 644.3L372 641.0L374 638.0L376 635.2L378 632.9L380 631.0L382 629.7L384 628.8L386 628.4L388 628.4L390 628.8L392 629.7L394 631.0L396 632.8L398 635.1L400 637.7L402 640.6L404 643.5L406 646.5L408 649.4L410 652.1L412 654.7L414 657.1L416 659.2L418 661.0L420 662.4L422 663.4L424 663.9L426 664.0L428 663.5L430 662.5L432 661.0L434 658.9L436 656.3L438 653.3L440 649.9L442 646.1L444 642.1L446 637.9L448 633.5L450 629.0L452 624.5L454 619.9L456 615.4L458 611.0L460 606.7L462 602.7L464 599.1L466 596.0L468 593.5L470 591.7L472 590.7L474 590.5L476 591.2L478 592.6L480 594.7L482 597.4L484 600.7L486 604.5L488 608.7L490 613.2L492 618.2L494 623.3L496 628.7L498 634.3L500 639.9L502 645.7L504 651.4L506 657.0L508 662.6L510 668.0L512 673.2L514 678.1L516 682.5L518 686.6L520 690.0L522 692.8L524 694.8L526 695.9L528 695.9L530 694.8L532 692.8L534 690.0L536 686.5L538 682.4L540 677.7L542 672.5L544 667.0L546 661.1L548 654.9L550 648.5L552 641.9L554 635.2L556 628.5L558 621.8L560 615.2L562 608.8L564 602.7L566 597.1L568 592.2L570 588.1L572 584.9L574 582.6L576 581.3L578 581.0L580 581.7L582 583.5L584 586.2L586 590.0L588 594.7L590 600.2L592 606.2L594 612.3L596 618.5L598 624.4L600 630.1L602 635.5L604 640.7L606 645.8L608 650.7L610 655.6L612 660.4L614 665.1L616 669.7L618 674.0L620 677.9L622 681.4L624 684.4L626 686.8L628 688.6L630 689.7L632 690.0L634 689.5L636 688.2L638 686.1L640 683.0L642 679.0L644 674.3L646 669.1L648 663.6L650 658.0L652 652.5L654 647.2L656 642.2L658 637.4L660 633.0L662 628.9L664 625.3L666 622.1L668 619.2L670 616.7L672 614.5L674 612.4L676 610.6L678 609.0L680 607.5L682 606.1L684 604.9L686 603.9L688 603.2L690 602.7L692 602.5L694 602.6L696 603.0L698 603.8L700 605.2L702 607.2L704 610.2L706 614.1L708 619.0L710 624.4L712 630.0L714 635.5L716 640.5L718 645.1L720 649.2L722 652.9L724 656.3L726 659.4L728 662.3L730 665.0L732 667.5L734 669.9L736 672.1L738 674.0L740 675.6L742 676.9L744 677.8L746 678.3L748 678.5L750 678.1L752 677.4L754 676.3L756 674.9L758 673.0L760 670.9L762 668.6L764 666.0L766 663.4L768 660.6L770 657.9L772 655.1L774 652.3L774 649.6L772 651.1L770 652.9L768 654.9L766 657.1L764 659.4L762 661.6L760 663.7L758 665.6L756 667.2L754 668.5L752 669.5L750 670.1L748 670.4L746 670.3L744 669.8L742 669.0L740 667.8L738 666.4L736 664.7L734 662.8L732 660.7L730 658.5L728 656.3L726 654.0L724 651.8L722 649.9L720 648.4L718 646.9L716 644.7L714 641.2L712 636.6L710 631.7L708 626.9L706 622.5L704 618.9L702 616.3L700 614.5L698 613.2L696 612.5L694 612.1L692 612.0L690 612.2L688 612.7L686 613.4L684 614.2L682 615.3L680 616.5L678 617.9L676 619.4L674 621.0L672 622.8L670 624.8L668 627.1L666 629.7L664 632.5L662 635.7L660 639.2L658 642.6L656 645.6L654 647.7L652 649.8L650 653.0L648 657.3L646 662.1L644 666.7L642 670.9L640 674.5L638 677.3L636 679.2L634 680.4L632 680.8L630 680.5L628 679.5L626 678.0L624 675.8L622 673.1L620 669.9L618 666.4L616 662.6L614 658.6L612 654.8L610 651.4L608 649.0L606 647.2L604 644.8L602 641.1L600 636.7L598 631.7L596 626.4L594 620.9L592 615.3L590 610.0L588 605.1L586 600.8L584 597.4L582 594.9L580 593.4L578 592.7L576 593.0L574 594.1L572 596.2L570 599.1L568 602.7L566 607.2L564 612.2L562 617.7L560 623.5L558 629.4L556 635.3L554 641.0L552 645.5L550 648.2L548 651.0L546 655.3L544 660.2L542 665.1L540 669.7L538 673.9L536 677.6L534 680.8L532 683.3L530 685.1L528 686.1L526 686.1L524 685.1L522 683.3L520 680.8L518 677.7L516 674.1L514 670.1L512 665.7L510 661.1L508 656.5L506 652.3L504 649.2L502 647.2L500 644.3L498 640.2L496 635.5L494 630.8L492 626.1L490 621.7L488 617.6L486 613.8L484 610.4L482 607.5L480 605.0L478 603.1L476 601.9L474 601.3L472 601.5L470 602.4L468 604.0L466 606.2L464 609.0L462 612.3L460 615.9L458 619.7L456 623.7L454 627.7L452 631.8L450 635.8L448 639.6L446 642.9L444 645.6L442 647.3L440 648.7L438 650.1L436 651.9L434 653.6L432 655.2L430 656.5L428 657.3L426 657.6L424 657.6L422 657.2L420 656.3L418 655.2L416 653.9L414 652.4L412 650.9L410 649.6L408 648.5L406 647.5L404 646.3L402 644.7L400 642.8L398 640.9L396 639.0L394 637.5L392 636.3L390 635.6L388 635.3L386 635.3L384 635.6L382 636.3L380 637.5L378 639.0L376 640.9L374 643.0L372 645.0L370 646.6L368 647.9L366 649.1L364 650.6L362 652.5L360 654.4L358 656.2L356 657.4L354 657.7L352 657.0L350 655.6L348 653.7L346 651.9Z" fill="url(#gb)"/>
<path d="M774 652.3L776 649.4L778 646.4L780 643.3L782 640.1L784 636.8L786 633.3L788 629.6L790 625.8L792 621.8L794 617.8L796 613.8L798 609.9L800 606.1L802 602.6L804 599.3L806 596.3L808 593.7L810 591.5L812 589.7L814 588.4L816 587.4L818 586.9L820 586.8L822 587.2L824 588.1L826 589.3L828 591.0L830 593.1L832 595.5L834 598.4L836 601.7L838 605.4L840 609.7L842 614.4L844 619.7L846 625.3L848 631.3L850 637.4L852 643.8L854 650.2L856 656.6L858 662.8L860 668.9L862 674.8L864 680.5L866 685.8L866 681.1L864 675.8L862 670.4L860 664.8L858 659.1L856 653.3L854 647.5L852 646.6L850 640.9L848 635.2L846 629.6L844 624.2L842 619.1L840 614.5L838 610.3L836 606.5L834 603.3L832 600.4L830 598.0L828 595.9L826 594.3L824 593.0L822 592.2L820 591.8L818 591.8L816 592.4L814 593.3L812 594.7L810 596.5L808 598.6L806 601.2L804 604.2L802 607.4L800 610.9L798 614.7L796 618.5L794 622.4L792 626.2L790 630.0L788 633.6L786 637.0L784 640.3L782 643.3L780 646.2L778 649.0L776 646.9L774 649.5Z" fill="#eaf5fb" fill-opacity=".6"/>
<path d="M866 685.8L868 690.9L870 695.6L872 700.0L874 704.0L876 707.4L878 710.0L880 711.6L882 712.0L884 711.1L886 709.0L888 706.0L890 702.2L892 697.6L894 692.4L896 686.7L898 680.4L900 673.5L902 666.0L904 658.0L906 649.4L908 640.4L910 631.3L912 622.3L914 613.6L916 605.4L918 597.9L920 590.9L922 584.6L924 579.0L926 574.0L928 569.7L930 566.1L932 563.2L934 560.9L936 559.3L938 558.3L940 558.0L942 558.4L944 559.7L946 562.0L948 565.4L950 569.5L952 574.3L954 579.2L956 584.2L958 589.4L960 594.8L962 600.6L964 606.9L966 613.6L968 620.5L970 627.6L972 634.6L974 641.4L976 647.8L978 654.0L980 659.8L982 665.4L984 670.6L986 675.4L988 679.9L990 684.0L992 687.8L994 691.1L996 694.0L998 696.2L1000 697.6L1002 698.1L1004 697.7L1006 696.6L1008 694.7L1010 692.4L1012 689.6L1014 686.6L1016 683.3L1018 679.9L1020 676.4L1022 672.9L1024 669.3L1026 665.7L1028 662.1L1030 658.6L1032 655.1L1034 651.6L1036 648.0L1038 644.5L1040 640.9L1042 637.2L1044 633.5L1044 639.6L1042 642.5L1040 644.9L1038 646.7L1036 648.0L1034 649.3L1032 651.1L1030 653.4L1028 656.1L1026 659.1L1024 662.2L1022 665.4L1020 668.6L1018 671.7L1016 674.8L1014 677.7L1012 680.4L1010 682.9L1008 685.0L1006 686.7L1004 687.8L1002 688.1L1000 687.7L998 686.4L996 684.4L994 681.8L992 678.8L990 675.4L988 671.7L986 667.7L984 663.4L982 658.8L980 654.3L978 650.5L976 647.9L974 645.2L972 640.4L970 634.5L968 628.3L966 622.0L964 616.0L962 610.4L960 605.1L958 600.2L956 595.6L954 591.0L952 586.6L950 582.4L948 578.6L946 575.6L944 573.5L942 572.4L940 572.0L938 572.3L936 573.2L934 574.6L932 576.7L930 579.3L928 582.6L926 586.4L924 590.9L922 596.0L920 601.6L918 607.9L916 614.7L914 622.0L912 629.8L910 637.7L908 644.6L906 648.5L904 653.0L902 659.4L900 666.0L898 672.1L896 677.8L894 683.0L892 687.6L890 691.7L888 695.2L886 697.9L884 699.8L882 700.6L880 700.2L878 698.8L876 696.4L874 693.4L872 689.8L870 685.9L868 681.6L866 677.0Z" fill="url(#gb)"/>
<path d="M220.0 590.9C222.6 591.5 229.2 592.3 235.5 594.5C241.8 596.7 249.9 599.2 257.6 604.3C265.4 609.4 273.8 617.3 282.0 624.9C290.2 632.5 298.8 641.2 307.0 649.9C315.2 658.6 323.3 668.9 331.5 676.9C339.7 684.9 347.8 692.7 356.0 697.9C364.2 703.1 374.8 705.9 381.0 707.9C387.2 709.9 389.0 709.7 393.0 709.9C397.0 710.1 398.8 710.7 405.0 708.9C411.2 707.1 421.7 703.4 430.0 698.9C438.3 694.4 447.5 687.6 455.0 681.9C462.5 676.2 469.6 669.4 475.0 664.9C480.4 660.4 481.4 658.1 487.6 654.9C493.8 651.7 503.8 647.6 512.0 645.9C520.2 644.2 528.8 645.1 537.0 644.9C545.2 644.7 553.3 645.6 561.5 644.9C569.7 644.2 577.8 643.4 586.0 640.9C594.2 638.4 602.8 635.8 611.0 629.9C619.2 624.0 627.3 615.8 635.5 605.6C643.7 595.4 651.8 581.6 660.0 568.6C668.2 555.6 678.2 538.7 684.7 527.9C691.2 517.1 693.6 510.1 699.0 503.9C704.4 497.6 711.1 493.1 717.0 490.4C722.9 487.6 729.1 487.0 734.6 487.4C740.1 487.8 746.1 490.9 750.0 492.9C753.9 494.9 754.2 493.9 758.0 499.4C761.8 504.9 768.0 516.5 773.0 525.9C778.0 535.3 783.1 545.3 788.0 555.6C792.9 565.9 797.8 577.1 802.6 587.9C807.4 598.7 812.1 609.3 817.0 620.6C821.9 631.9 827.3 645.2 832.0 655.9C836.7 666.6 840.7 675.4 845.0 684.9C849.3 694.4 853.5 704.2 858.0 712.9C862.5 721.6 866.8 730.2 872.0 736.9C877.2 743.6 883.5 749.6 889.0 752.9C894.5 756.1 899.7 757.2 905.0 756.4C910.3 755.6 915.4 753.0 921.0 747.9C926.6 742.8 933.2 733.2 938.5 725.9C943.8 718.6 948.1 711.9 953.0 703.9C957.9 695.9 963.8 685.2 968.0 677.9C972.2 670.6 974.7 665.6 978.0 659.9C981.3 654.2 984.1 649.6 987.8 643.9C991.5 638.2 995.9 630.6 1000.0 625.9C1004.1 621.1 1008.3 618.1 1012.4 615.4C1016.5 612.7 1021.0 611.2 1024.7 609.9C1028.4 608.6 1030.4 608.2 1034.6 607.4C1038.8 606.6 1047.4 605.3 1050.0 604.9L1050.0 611.1C1047.4 611.5 1038.8 612.8 1034.6 613.6C1030.4 614.4 1028.4 614.8 1024.7 616.1C1021.0 617.4 1016.5 618.9 1012.4 621.6C1008.3 624.3 1004.1 627.4 1000.0 632.1C995.9 636.9 991.5 644.4 987.8 650.1C984.1 655.8 981.3 660.4 978.0 666.1C974.7 671.8 972.2 676.8 968.0 684.1C963.8 691.4 957.9 702.1 953.0 710.1C948.1 718.1 943.8 724.8 938.5 732.1C933.2 739.4 926.6 749.0 921.0 754.1C915.4 759.2 910.3 761.8 905.0 762.6C899.7 763.4 894.5 762.4 889.0 759.1C883.5 755.9 877.2 749.8 872.0 743.1C866.8 736.4 862.5 727.8 858.0 719.1C853.5 710.4 849.3 700.6 845.0 691.1C840.7 681.6 836.7 672.8 832.0 662.1C827.3 651.4 821.9 638.1 817.0 626.8C812.1 615.5 807.4 604.9 802.6 594.1C797.8 583.3 792.9 572.1 788.0 561.8C783.1 551.5 778.0 541.5 773.0 532.1C768.0 522.7 761.8 511.1 758.0 505.6C754.2 500.1 753.9 501.1 750.0 499.1C746.1 497.1 740.1 494.0 734.6 493.6C729.1 493.2 722.9 493.9 717.0 496.6C711.1 499.4 704.4 503.9 699.0 510.1C693.6 516.4 691.2 523.3 684.7 534.1C678.2 544.9 668.2 561.9 660.0 574.8C651.8 587.8 643.7 601.6 635.5 611.8C627.3 622.0 619.2 630.2 611.0 636.1C602.8 642.0 594.2 644.6 586.0 647.1C577.8 649.6 569.7 650.4 561.5 651.1C553.3 651.8 545.2 650.9 537.0 651.1C528.8 651.3 520.2 650.4 512.0 652.1C503.8 653.8 493.8 657.9 487.6 661.1C481.4 664.3 480.4 666.6 475.0 671.1C469.6 675.6 462.5 682.4 455.0 688.1C447.5 693.8 438.3 700.6 430.0 705.1C421.7 709.6 411.2 713.3 405.0 715.1C398.8 716.9 397.0 716.3 393.0 716.1C389.0 715.9 387.2 716.1 381.0 714.1C374.8 712.1 364.2 709.3 356.0 704.1C347.8 698.9 339.7 691.1 331.5 683.1C323.3 675.1 315.2 664.8 307.0 656.1C298.8 647.4 290.2 638.7 282.0 631.1C273.8 623.5 265.4 615.6 257.6 610.5C249.9 605.4 241.8 602.9 235.5 600.7C229.2 598.5 222.6 597.7 220.0 597.1Z" fill="#f6fafd" stroke="#f6fafd" stroke-width="3.3" stroke-linejoin="round"/>
</g>
</svg>
<div class="a" style="left:57px;top:57px;width:302px;height:227px;border:5px solid #fff;background:#000;box-shadow:0 0 1px #fff;"></div>
<div class="a" style="left:486px;top:90px;width:314px;height:2.4px;background:linear-gradient(90deg,#fff 0%,#f0f4f4 35%,#9fb0b0 70%,#5b7272 100%);"></div>
<div class="a" style="left:486px;top:140px;width:314px;height:2.4px;background:linear-gradient(90deg,#fff 0%,#f0f4f4 35%,#9fb0b0 70%,#5b7272 100%);"></div>
<div class="a" style="left:605px;top:571.6px;width:193px;height:2.4px;background:linear-gradient(90deg,#fff 0%,#f0f4f4 35%,#9fb0b0 70%,#5b7272 100%);"></div>
</div>

<span class="t" style="left:-5.4px;top:51.6px;font-size:13px;color:#7f7f7f;transform:scaleX(0.9955);">Paste</span>
<span class="t" style="left:63.5px;top:10.2px;font-size:13px;color:#7f7f7f;transform:scaleX(0.9736);">Cut</span>
<span class="t" style="left:63.5px;top:35.5px;font-size:13px;color:#1e1e1e;transform:scaleX(1.0191);">Copy path</span>
<span class="t" style="left:63.5px;top:61.5px;font-size:13px;color:#7f7f7f;">Paste shortcut</span>
<span class="t" style="left:0.1px;top:93.2px;font-size:13px;color:#444444;transform:scaleX(1.0797);">board</span>
<span class="t" style="left:169.5px;top:51.8px;font-size:13px;color:#7f7f7f;transform:scaleX(1.0567);">Move</span>
<span class="t" style="left:174.1px;top:68.0px;font-size:13px;color:#7f7f7f;transform:scaleX(1.1712);">to</span>
<span class="t" style="left:220.7px;top:51.8px;font-size:13px;color:#1e1e1e;transform:scaleX(1.0178);">Copy</span>
<span class="t" style="left:224.4px;top:68.0px;font-size:13px;color:#1e1e1e;transform:scaleX(1.1712);">to</span>
<span class="t" style="left:275.8px;top:51.8px;font-size:13px;color:#1e1e1e;transform:scaleX(0.9820);">Delete</span>
<span class="t" style="left:321.8px;top:51.8px;font-size:13px;color:#7f7f7f;transform:scaleX(0.9564);">Rename</span>
<span class="t" style="left:239.8px;top:93.2px;font-size:13px;color:#444444;transform:scaleX(1.0085);">Organize</span>
<span class="t" style="left:394.5px;top:51.8px;font-size:13px;color:#7f7f7f;transform:scaleX(1.0340);">New</span>
<span class="t" style="left:390.5px;top:68.0px;font-size:13px;color:#7f7f7f;transform:scaleX(1.0882);">folder</span>
<span class="t" style="left:459.8px;top:10.1px;font-size:13px;color:#7f7f7f;transform:scaleX(1.0205);">New item</span>
<span class="t" style="left:459.8px;top:35.5px;font-size:13px;color:#1e1e1e;transform:scaleX(0.9344);">Easy access</span>
<span class="t" style="left:449.7px;top:93.2px;font-size:13px;color:#444444;transform:scaleX(1.0148);">New</span>
<span class="t" style="left:556.5px;top:51.8px;font-size:13px;color:#1e1e1e;transform:scaleX(1.0177);">Properties</span>
<span class="t" style="left:645.6px;top:10.4px;font-size:13px;color:#1e1e1e;transform:scaleX(1.0248);">Open</span>
<span class="t" style="left:645.6px;top:37.5px;font-size:13px;color:#7f7f7f;transform:scaleX(1.0086);">Edit</span>
<span class="t" style="left:645.6px;top:64.7px;font-size:13px;color:#1e1e1e;transform:scaleX(1.0333);">History</span>
<span class="t" style="left:607.8px;top:93.2px;font-size:13px;color:#444444;transform:scaleX(1.0185);">Open</span>
<span class="t" style="left:731.3px;top:10.1px;font-size:13px;color:#1e1e1e;transform:scaleX(0.9839);">Select all</span>
<span class="t" style="left:731.3px;top:35.5px;font-size:13px;color:#1e1e1e;transform:scaleX(0.9829);">Select none</span>
<span class="t" style="left:731.3px;top:61.3px;font-size:13px;color:#1e1e1e;">Invert selection</span>
<span class="t" style="left:746.4px;top:93.2px;font-size:13px;color:#444444;transform:scaleX(0.9684);">Select</span>
<span class="t" style="left:39.4px;top:125.4px;font-size:14.5px;color:#1e1e1e;transform:scaleX(0.9035);">This PC</span>
<span class="t" style="left:113.1px;top:125.4px;font-size:14.5px;color:#1e1e1e;transform:scaleX(1.0098);">DVD Drive (D:) ATICD12-130</span>
<span class="t" style="left:859.7px;top:127.1px;font-size:14px;color:#6d6d6d;transform:scaleX(1.0351);">Search DVD Drive (D:) ATICD12-130</span>
<span class="t" style="left:30.2px;top:165.3px;font-size:14px;color:#4c607a;transform:scaleX(1.1028);">Name</span>
<span class="t" style="left:441.5px;top:165.9px;font-size:14px;color:#4c607a;transform:scaleX(1.1240);">Date modified</span>
<span class="t" style="left:666.9px;top:165.9px;font-size:14px;color:#4c607a;transform:scaleX(1.0310);">Type</span>
<span class="t" style="left:853.9px;top:165.7px;font-size:14px;color:#4c607a;transform:scaleX(1.0244);">Size</span>
<span class="t" style="left:57.9px;top:203.4px;font-size:14px;color:#1e1e1e;transform:scaleX(1.0576);">Bin</span>
<span class="t" style="left:57.9px;top:230.5px;font-size:14px;color:#1e1e1e;transform:scaleX(1.0238);">Install Pack</span>
<span class="t" style="left:57.9px;top:257.5px;font-size:14px;color:#1e1e1e;transform:scaleX(1.0650);">Online</span>
<span class="t" style="left:57.9px;top:284.5px;font-size:14px;color:#1e1e1e;transform:scaleX(1.0494);">Vista</span>
<span class="t" style="left:57.9px;top:311.6px;font-size:14px;color:#1e1e1e;transform:scaleX(1.0820);">autorun.inf</span>
<span class="t" style="left:57.9px;top:338.6px;font-size:14px;color:#1e1e1e;">Launch.exe</span>
<span class="t" style="left:57.9px;top:365.6px;font-size:14px;color:#1e1e1e;transform:scaleX(1.0219);">Launch.ico</span>
<span class="t" style="left:57.9px;top:392.7px;font-size:14px;color:#1e1e1e;transform:scaleX(1.0215);">Launch.ini</span>
<span class="t" style="left:441.5px;top:203.4px;font-size:14px;color:#6d6d6d;transform:scaleX(1.0768);">5/2/2012 5:33 AM</span>
<span class="t" style="left:666.9px;top:203.4px;font-size:14px;color:#6d6d6d;transform:scaleX(1.0916);">File folder</span>
<span class="t" style="left:441.5px;top:230.4px;font-size:14px;color:#6d6d6d;transform:scaleX(1.0768);">5/2/2012 5:34 AM</span>
<span class="t" style="left:666.9px;top:230.4px;font-size:14px;color:#6d6d6d;transform:scaleX(1.0916);">File folder</span>
<span class="t" style="left:-5.1px;top:335.7px;font-size:14px;color:#1e1e1e;">wi</span>
<span class="t" style="left:-2.4px;top:393.6px;font-size:14px;color:#1e1e1e;">ii</span>
<span class="t" style="left:-5.4px;top:466.1px;font-size:14px;color:#1e1e1e;">er</span>
<span class="t" style="left:-3.1px;top:503.1px;font-size:14px;color:#1e1e1e;">v,</span>
<span class="t" style="left:-5.1px;top:784.9px;font-size:14px;color:#1e1e1e;">C</span>
<span class="t" style="left:1.7px;top:812.4px;font-size:14px;color:#1e1e1e;">[</span>
<span class="t" style="left:323.8px;top:317.5px;font-size:15px;color:#f4f4ee;font-weight:700;transform:scaleX(0.9618);text-shadow:0 0 1.5px rgba(255,255,255,.3);z-index:5;">Support Model :</span>
<span class="t" style="left:323.2px;top:355.4px;font-size:15px;color:#f4f4ee;font-weight:700;transform:scaleX(1.0051);text-shadow:0 0 1.5px rgba(255,255,255,.3);z-index:5;">Radeon HD 2xxx/3xxx/4xxx Series</span>
<span class="t" style="left:323.2px;top:374.2px;font-size:15px;color:#f4f4ee;font-weight:700;transform:scaleX(1.0051);text-shadow:0 0 1.5px rgba(255,255,255,.3);z-index:5;">Radeon HD 54xx/55xx/56xx Series</span>
<span class="t" style="left:323.2px;top:393.0px;font-size:15px;color:#f4f4ee;font-weight:700;transform:scaleX(1.0051);text-shadow:0 0 1.5px rgba(255,255,255,.3);z-index:5;">Radeon HD 57xx/58xx/59xx Series</span>
<span class="t" style="left:323.2px;top:411.8px;font-size:15px;color:#f4f4ee;font-weight:700;text-shadow:0 0 1.5px rgba(255,255,255,.3);z-index:5;">Radeon HD 62xx/63xx Series</span>
<span class="t" style="left:323.2px;top:430.6px;font-size:15px;color:#f4f4ee;font-weight:700;transform:scaleX(1.0051);text-shadow:0 0 1.5px rgba(255,255,255,.3);z-index:5;">Radeon HD 64xx/65xx/66xx Series</span>
<span class="t" style="left:323.2px;top:449.5px;font-size:15px;color:#f4f4ee;font-weight:700;transform:scaleX(1.0051);text-shadow:0 0 1.5px rgba(255,255,255,.3);z-index:5;">Radeon HD 67xx/68xx/69xx Series</span>
<span class="t" style="left:323.2px;top:468.3px;font-size:15px;color:#f4f4ee;font-weight:700;transform:scaleX(1.0051);text-shadow:0 0 1.5px rgba(255,255,255,.3);z-index:5;">Radeon HD 73xx/74xx/75xx Series</span>
<span class="t" style="left:323.2px;top:487.1px;font-size:15px;color:#f4f4ee;font-weight:700;transform:scaleX(1.0051);text-shadow:0 0 1.5px rgba(255,255,255,.3);z-index:5;">Radeon HD 77xx/78xx/79xx Series</span>
<span class="t" style="left:792.5px;top:305.7px;font-size:17px;color:#f4f4ee;font-weight:700;transform:scaleX(0.9948);text-shadow:0 0 1.5px rgba(255,255,255,.3);z-index:5;">Windows XP / XP64</span>
<span class="t" style="left:792.5px;top:356.1px;font-size:17px;color:#f4f4ee;font-weight:700;transform:scaleX(0.9824);text-shadow:0 0 1.5px rgba(255,255,255,.3);z-index:5;">Windows 7 / Vista</span>
<span class="t" style="left:881.8px;top:788.6px;font-size:16.5px;color:#f4f4ee;font-weight:700;transform:scaleX(1.0143);text-shadow:0 0 1.5px rgba(255,255,255,.3);z-index:5;">&lt;&lt; Previous</span>
<span class="t" style="left:306.6px;top:759.6px;font-size:17px;color:#ffffff;font-weight:700;transform:scaleX(1.4811);z-index:5;-webkit-text-stroke:0.45px #fff;">www.sapphiretech.com</span>
</body>
</html>
